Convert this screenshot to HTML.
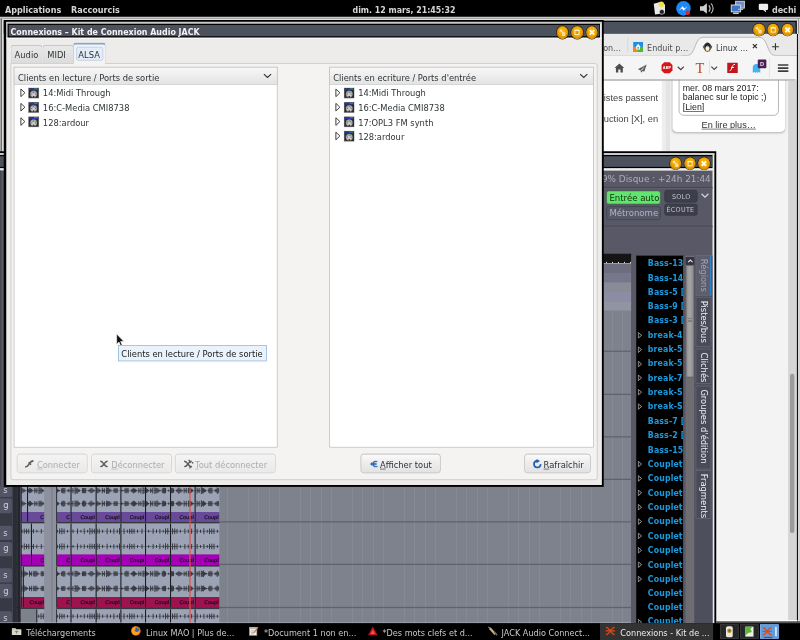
<!DOCTYPE html>
<html lang="fr"><head><meta charset="utf-8"><title>Connexions – Kit de Connexion Audio JACK</title>
<style>
*{box-sizing:border-box;margin:0;padding:0}
html,body{width:800px;height:640px;overflow:hidden;background:#000}
#s{position:absolute;left:0;top:0;width:1280px;height:1024px;transform:scale(.625);transform-origin:0 0;overflow:hidden;filter:blur(.4px);font-family:"DejaVu Sans","Liberation Sans",sans-serif;font-size:13.33px;color:#2e3436;background:#000}
#s div,#s span,#s svg{position:absolute}
.t{white-space:nowrap;line-height:1}
.t u{text-underline-offset:2.2px}
.b{font-weight:bold}
/* window title buttons */
.wb{width:18.4px;height:19.6px;border-radius:50%;background:radial-gradient(ellipse at 50% 38%,#ffbe14 0%,#f0a400 48%,#c98500 78%,#7a4f00 100%);box-shadow:0 0 0 1.1px #2e2100}
.wb svg{left:0;top:0}
/* gtk */
.btn{border:1.3px solid #a9a9a9;border-radius:5px;background:linear-gradient(#fbfbfb,#ececec 50%,#e2e2e2);box-shadow:inset 0 0 0 1px rgba(255,255,255,.7)}
.btn.dis{border-color:#c4c4c4;background:linear-gradient(#f4f4f4,#e9e9e9)}
.hdr{border:1.3px solid #c2c2c2;background:linear-gradient(#f8f8f8,#ededed 50%,#e3e3e3)}
.list{background:#fff;border:1.3px solid #b4b2b0}
.tab{border:1.3px solid #bdbdbd;border-bottom:none;background:linear-gradient(#e9e9e9,#dcdcdc);border-radius:5px 5px 0 0}
.abtn{border-radius:4px;border:1.3px solid #3b3b48}
</style></head>
<body><div id="s">
<div style="left:0px;top:0px;width:1280px;height:27px;background:#000;"></div>
<span class="t" style="left:8px;top:9.59px;font-size:12.9px;color:#d6d6d6;font-weight:bold;">Applications</span>
<span class="t" style="left:113.6px;top:9.59px;font-size:12.9px;color:#d6d6d6;font-weight:bold;">Raccourcis</span>
<span class="t" style="left:564px;top:9.84px;font-size:12.6px;color:#d6d6d6;font-weight:bold;">dim. 12 mars, 21:45:32</span>
<span class="t" style="left:1235px;top:9.59px;font-size:12.9px;color:#d0d0d0;font-weight:bold;">dechi</span>
<svg style="left:1040px;top:0" width="240" height="27" viewBox="0 0 240 27">
<g><path d="M6 6l10-3 8 4v14l-16 2z" fill="#e8e8e8"/><circle cx="18" cy="7" r="4.5" fill="#f3e14a"/><circle cx="19" cy="19" r="4" fill="#222" stroke="#ddd" stroke-width="1"/></g>
<circle cx="53.5" cy="13.4" r="11.6" fill="#1e86f5"/><path d="M46 17l6-7 3 3.4 5-3.4-6 7-3-3.4z" fill="#fff"/><circle cx="60.5" cy="20.5" r="3.6" fill="#e22"/>
<g fill="#cfcfcf"><path d="M80 10h5l6-5v17l-6-5h-5z"/><path d="M94 8.5a7 7 0 0 1 0 10" fill="none" stroke="#cfcfcf" stroke-width="1.8"/><path d="M97.5 5.5a11 11 0 0 1 0 16" fill="none" stroke="#bdbdbd" stroke-width="1.8"/></g>
<g><rect x="137" y="2" width="14" height="11" fill="#6a8fd0" stroke="#d8d8d8" stroke-width="1.5"/><rect x="130" y="8" width="15" height="11" fill="#3f74c8" stroke="#e0e0e0" stroke-width="1.5"/><rect x="133" y="20" width="9" height="2.5" fill="#ccc"/><rect x="141" y="14" width="8" height="2" fill="#bbb"/></g>
<path d="M176 6h11a2 2 0 0 1 2 2v6a2 2 0 0 1-2 2h-2l1 4-5-4h-5a2 2 0 0 1-2-2v-6a2 2 0 0 1 2-2z" fill="#eee"/>
</svg>
<div style="left:0px;top:26.8px;width:1280px;height:971px;background:#f3f3f3;"></div>
<div style="left:0px;top:26.8px;width:1280px;height:2.2px;background:#c9c9c9;"></div>
<div style="left:0px;top:29px;width:1280px;height:1.2px;background:#5c5c5c;"></div>
<div style="left:0px;top:30.2px;width:1280px;height:3px;background:#dedede;"></div>
<div style="left:5px;top:33px;width:1269.5px;height:21px;background:#000;"></div>
<div style="left:6.4px;top:35px;width:1266.6px;height:17.6px;background:#4c515e;"></div>
<div style="left:6.4px;top:128.6px;width:1053px;height:113px;background:#fff;"></div>
<div style="left:1059px;top:128.6px;width:6px;height:113px;background:#eeeeee;"></div>
<div style="left:1065px;top:128.6px;width:7px;height:113px;background:#e4e4e4;"></div>
<span class="t" style="left:966px;top:148.59px;font-size:14.9px;color:#444;font-family:'Liberation Sans',sans-serif;">istes passent</span>
<span class="t" style="left:966px;top:182.59px;font-size:14.9px;color:#444;font-family:'Liberation Sans',sans-serif;">uction [X], en</span>
<div style="left:1076px;top:100px;width:179.5px;height:111px;background:#fff;border-radius:7px;box-shadow:0 1.5px 4px rgba(0,0,0,.28)"></div>
<div style="left:1086px;top:100px;width:160px;height:84.8px;background:#fff;border:1.2px solid #8c8c8c;border-radius:8px"></div>
<span class="t" style="left:1092.4px;top:132.67px;font-size:14.1px;color:#222;font-family:'Liberation Sans',sans-serif;">mer. 08 mars 2017:</span>
<span class="t" style="left:1092.4px;top:148.47px;font-size:14.1px;color:#222;font-family:'Liberation Sans',sans-serif;">balanec sur le topic ;)</span>
<span class="t" style="left:1092.4px;top:164.47px;font-size:14.1px;color:#222;font-family:'Liberation Sans',sans-serif;">[<u>Lien</u>]</span>
<span class="t" style="left:1122.6px;top:191.85px;font-size:14.6px;color:#333;font-family:'Liberation Sans',sans-serif;"><u>En lire plus…</u></span>
<div style="left:6.4px;top:54px;width:1267px;height:35px;background:#e9e9e9;"></div>
<div style="left:6.4px;top:88.2px;width:1267px;height:1.2px;background:#b9b9b9;"></div>
<svg style="left:1090px;top:54px" width="185" height="36" viewBox="1090 54 185 36">
<path d="M1090 89.4H1100C1113 89.4 1111 59.6 1125 59.6H1215C1229 59.6 1227 89.4 1240 89.4H1275V90H1090z" fill="#f5f5f5"/>
<path d="M1090 88.8H1100C1113 88.8 1111 59.6 1125 59.6H1215C1229 59.6 1227 88.8 1240 88.8H1275" fill="none" stroke="#a8a8a8" stroke-width="1.2"/></svg>
<span class="t" style="left:965px;top:71.17px;font-size:12.8px;color:#4d4d4d;">on…</span>
<div style="left:1003.5px;top:60px;width:1.2px;height:24px;background:#cfcfcf;"></div>
<svg style="left:1013px;top:67px" width="16" height="16" viewBox="0 0 16 16"><rect width="16" height="16" fill="#1f8fe0"/><rect y="8" width="8" height="8" fill="#f08a1c"/><rect x="8" y="8" width="8" height="8" fill="#59b52c"/><path d="M5 7l3-4 3 4v5H5z" fill="#fff"/><rect x="7" y="8" width="2" height="3" fill="#1f8fe0"/></svg>
<span class="t" style="left:1035.4px;top:71.17px;font-size:12.8px;color:#4d4d4d;">Enduit p…</span>
<svg style="left:1122.6px;top:66px" width="18" height="18" viewBox="0 0 18 18"><ellipse cx="9" cy="10" rx="5.4" ry="6.6" fill="#222"/><ellipse cx="9" cy="11.5" rx="3.3" ry="4.2" fill="#f4f4f4"/><ellipse cx="9" cy="5" rx="3.4" ry="3.2" fill="#222"/><path d="M3.2 8a6 6 0 0 1 11.6 0" fill="none" stroke="#333" stroke-width="1.6"/><rect x="2" y="7" width="2.6" height="4.4" rx="1" fill="#555"/><rect x="13.4" y="7" width="2.6" height="4.4" rx="1" fill="#555"/><path d="M4.5 16.5h4v-1.6h-3zM13.5 16.5h-4v-1.6h3z" fill="#f2a100"/><path d="M7.8 6.2h2.4L9 7.6z" fill="#f2a100"/></svg>
<span class="t" style="left:1145.6px;top:71.17px;font-size:12.8px;color:#333;">Linux …</span>
<svg style="left:1203.4px;top:69.4px" width="9.6" height="9.6" viewBox="0 0 12 12"><path d="M2 2l8 8M10 2l-8 8" stroke="#333" stroke-width="2.6"/></svg>
<svg style="left:1234.4px;top:67.6px" width="13.4" height="13.4" viewBox="0 0 18 18"><path d="M9 1.5v15M1.5 9h15" stroke="#333" stroke-width="2.4"/></svg>
<div class="wb" style="left:1205.2px;top:37.599999999999994px"><svg width="18.4" height="19.6" viewBox="0 0 18.4 19.6"><path d="M5.4 6.2l4 4M5.2 6h2.6M5.2 6v2.6" stroke="#ffefc0" stroke-width="1.7" fill="none"/><rect x="9.4" y="10.6" width="3.4" height="4" fill="#f6d27a" stroke="#fff0c8" stroke-width="1.2"/></svg></div>
<div class="wb" style="left:1228.1px;top:37.599999999999994px"><svg width="18.4" height="19.6" viewBox="0 0 18.4 19.6"><rect x="6" y="6.6" width="6.4" height="6.8" fill="#e39c00" stroke="#ffefc0" stroke-width="1.5"/><path d="M5.300000000000001 6.7h7.8" stroke="#fff3d0" stroke-width="2.2"/></svg></div>
<div class="wb" style="left:1251.1px;top:37.599999999999994px"><svg width="18.4" height="19.6" viewBox="0 0 18.4 19.6"><path d="M5.6 6.2l7.2 7.2M12.8 6.2l-7.2 7.2" stroke="#fffbe8" stroke-width="2.9" fill="none"/></svg></div>
<div style="left:6.4px;top:89.4px;width:1267px;height:37.8px;background:#f5f5f5;"></div>
<div style="left:6.4px;top:127px;width:1267px;height:1.6px;background:#a4a4a4;"></div>
<svg style="left:960px;top:89px" width="315" height="38" viewBox="0 0 315 38">
<g fill="#4f4f4f"><path transform="translate(31 19.8) scale(.74) translate(-31 -18.5)" d="M31 9l-10.5 9.5h3V28h5.2v-6h4.6v6h5.2v-9.5h3z"/><path transform="translate(67.6 20.8) scale(.62) translate(-66.5 -19.5)" fill="#5c5c5c" d="M78 9L55 21l7 2.6 1.6 6.4 4-4.6 4 2zM63 23l11-10-8.4 11.2z"/></g>
<g transform="translate(107.2 19.6) scale(.84) translate(-106.6 -19.4)"><path d="M101.4 10h10.4l5.2 5.2v10.4l-5.2 5.2h-10.400000000000006l-5.2-5.2v-10.4z" transform="translate(0 -1.2)" fill="#d8141c"/>
<text x="106.6" y="22.2" font-family="Liberation Sans,sans-serif" font-weight="bold" font-size="7.6" fill="#fff" text-anchor="middle">ABP</text></g>
<path d="M124.4 17.8l4.8 4.6 4.8-4.6" fill="none" stroke="#444" stroke-width="1.9"/>
<text x="152.6" y="27.4" font-family="Liberation Serif,serif" font-size="23" fill="#c5401f">T</text>
<rect x="174.6" y="8" width="1" height="22" fill="#d0d0d0"/>
<path d="M178.2 17.6l4.6 4.4 4.6-4.4" fill="none" stroke="#444" stroke-width="1.9"/>
<rect x="203.6" y="11.4" width="16.8" height="16.4" fill="#c4151c"/><path d="M216 14c-3.6 0-4.2 2.8-5.2 5.6s-1.6 4.6-3.2 4.6M210 19h4.2" fill="none" stroke="#fff" stroke-width="1.6"/>
<path d="M244.4 27.6v-8.2a6 6 0 0 1 12 0v8.2l-2-1.8-2 1.8-2-1.8-2 1.8-2-1.8z" fill="#44b4f0"/>
<rect x="252.4" y="6.2" width="13.8" height="14" rx="1.5" fill="#4b1f52"/><text x="259.3" y="16.6" font-family="Liberation Sans,sans-serif" font-weight="bold" font-size="9" fill="#e8d8ea" text-anchor="middle">D</text>
<rect x="271" y="3" width="1" height="32" fill="#dcdcdc"/>
<path d="M284.6 15h16.8M284.6 19.9h16.8M284.6 24.8h16.8" stroke="#3c3c3c" stroke-width="2.7"/>
</svg>
<div style="left:1260.5px;top:128.6px;width:14.6px;height:866px;background:#d5d5d5;"></div>
<div style="left:1264px;top:598.4px;width:6.8px;height:255px;background:#9b9b9b;border-radius:3.4px"></div>
<div style="left:1275px;top:54px;width:2px;height:943px;background:#111;"></div>
<div style="left:1277px;top:33px;width:3px;height:964px;background:#d4d4d4;"></div>
<div style="left:1273.6px;top:33px;width:1.2px;height:21px;background:#000;"></div>
<div style="left:1274.8px;top:33px;width:2px;height:21px;background:#e0e0e0;"></div>
<div style="left:1276.6px;top:30px;width:1.6px;height:24px;background:#666;"></div>
<div style="left:0px;top:29px;width:1.8px;height:968px;background:#a8a8a8;"></div>
<div style="left:1.8px;top:30px;width:1.6px;height:967px;background:#111;"></div>
<div style="left:3.4px;top:30.2px;width:3px;height:967px;background:#dcdcdc;"></div>
<div style="left:1146px;top:992px;width:130px;height:2.2px;background:#fdfdfd;"></div>
<div style="left:1146px;top:994px;width:134px;height:3px;background:#555;"></div>
<div style="left:-8px;top:241.5px;width:1154px;height:760px;background:#000;"></div>
<div style="left:-5px;top:244.5px;width:1148px;height:754px;background:#edecea;"></div>
<div style="left:-5px;top:244.5px;width:1148px;height:3.4px;background:#c9c9c8;"></div>
<div style="left:-2.4000000000000004px;top:247.5px;width:1142.8px;height:21.6px;background:#000;"></div>
<div style="left:-0.5999999999999996px;top:249.5px;width:1139.2px;height:17.6px;background:#4c515e;"></div>
<div class="wb" style="left:1072.0px;top:251.8px"><svg width="18.4" height="19.6" viewBox="0 0 18.4 19.6"><path d="M5.4 6.2l4 4M5.2 6h2.6M5.2 6v2.6" stroke="#ffefc0" stroke-width="1.7" fill="none"/><rect x="9.4" y="10.6" width="3.4" height="4" fill="#f6d27a" stroke="#fff0c8" stroke-width="1.2"/></svg></div>
<div class="wb" style="left:1094.6px;top:251.8px"><svg width="18.4" height="19.6" viewBox="0 0 18.4 19.6"><rect x="6" y="6.6" width="6.4" height="6.8" fill="#e39c00" stroke="#ffefc0" stroke-width="1.5"/><path d="M5.300000000000001 6.7h7.8" stroke="#fff3d0" stroke-width="2.2"/></svg></div>
<div class="wb" style="left:1117.3999999999999px;top:251.8px"><svg width="18.4" height="19.6" viewBox="0 0 18.4 19.6"><path d="M5.6 6.2l7.2 7.2M12.8 6.2l-7.2 7.2" stroke="#fffbe8" stroke-width="2.9" fill="none"/></svg></div>
<div style="left:0px;top:272.6px;width:1140px;height:730px;background:#585866;"></div>
<span class="t" style="right:142.79999999999995px;top:278.79px;font-size:14.2px;color:#aeaebb">DSP : 19% Disque : +24h 21:44</span>
<div style="left:0px;top:299.2px;width:1140px;height:1.4px;background:#474856;"></div>
<div style="left:0px;top:300.6px;width:1140px;height:1px;background:#626372;"></div>
<div class="abtn" style="left:970px;top:305.2px;width:87.4px;height:21.8px;background:#62e56f;border-color:#3b6b44"></div>
<span class="t" style="left:975px;top:309.81px;font-size:13.7px;color:#10300f;">Entrée auto</span>
<div class="abtn" style="left:970px;top:330px;width:87.4px;height:21.6px;background:#565768;"></div>
<span class="t" style="left:975px;top:334.81px;font-size:13.7px;color:#b4b4c0;">Métronome</span>
<div class="abtn" style="left:1063.2px;top:304.4px;width:52.4px;height:19.6px;background:#3d3e4b;border-color:#33343f"></div>
<span class="t" style="left:1075px;top:309.57px;font-size:10.2px;color:#c9c9d2;letter-spacing:.6px;">SOLO</span>
<div class="abtn" style="left:1063.2px;top:325.8px;width:52.4px;height:19.2px;background:#3d3e4b;border-color:#33343f"></div>
<span class="t" style="left:1066.4px;top:330.77px;font-size:10.2px;color:#c9c9d2;letter-spacing:.5px;">ÉCOUTE</span>
<svg style="left:1121px;top:308px" width="14" height="10" viewBox="0 0 14 10"><path d="M1.5 2l5.5 5.5L12.500000000000002 2" fill="none" stroke="#d8d8e0" stroke-width="1.8"/></svg>
<div style="left:0px;top:361.2px;width:1140px;height:1.8px;background:#494a56;"></div>
<div style="left:0px;top:363px;width:1140px;height:1px;background:#5f606e;"></div>
<div style="left:0px;top:409.2px;width:1010px;height:600px;background:#7e828d;"></div>
<div style="left:0px;top:496px;width:1010px;height:520px;background:repeating-linear-gradient(90deg,transparent 0 14.2px,#858a96 14.2px 15.4px,transparent 15.4px 16.64px);"></div>
<div style="left:0px;top:406.4px;width:1010px;height:15px;background:#151515;"></div>
<div style="left:0;top:418.8px;width:1010px;height:2.6px;background:repeating-linear-gradient(90deg,#ddd 0 1.2px,transparent 1.2px 9.6px)"></div>
<div style="left:0px;top:421.2px;width:1010px;height:1px;background:#cfcfd6;"></div>
<div style="left:0px;top:421.8px;width:1010px;height:15.2px;background:#6c6d7d;"></div>
<div style="left:0px;top:436.8px;width:1010px;height:15.2px;background:#76778a;"></div>
<div style="left:0px;top:451.8px;width:1010px;height:15.2px;background:#8b8b98;"></div>
<div style="left:0px;top:466.8px;width:1010px;height:15.2px;background:#8c8ca4;"></div>
<div style="left:0px;top:481.8px;width:1010px;height:15.2px;background:#9293a3;"></div>
<div style="left:0px;top:561.4px;width:1010px;height:2px;background:#5f626c;"></div>
<div style="left:0px;top:629.6px;width:1010px;height:2px;background:#5f626c;"></div>
<div style="left:0px;top:697.8px;width:1010px;height:2px;background:#5f626c;"></div>
<div style="left:0px;top:766.0px;width:1010px;height:2px;background:#5f626c;"></div>
<div style="left:0px;top:834.1999999999999px;width:1010px;height:2px;background:#5f626c;"></div>
<div style="left:0px;top:902.4px;width:1010px;height:2px;background:#5f626c;"></div>
<div style="left:0px;top:970.6px;width:1010px;height:2px;background:#5f626c;"></div>
<div style="left:0px;top:1038.8000000000002px;width:1010px;height:2px;background:#5f626c;"></div>
<div style="left:1010px;top:409.2px;width:8px;height:600px;background:#585866;"></div>
<div style="left:1017.6px;top:409.2px;width:76px;height:600px;background:#000;"></div>
<span class="t" style="left:1036.6px;top:415.62px;font-size:12.5px;color:#1c9ade;font-weight:bold;letter-spacing:.2px;">Bass-13</span>
<span class="t" style="left:1036.6px;top:438.57px;font-size:12.5px;color:#1c9ade;font-weight:bold;letter-spacing:.2px;">Bass-14</span>
<span class="t" style="left:1036.6px;top:461.52px;font-size:12.5px;color:#1c9ade;font-weight:bold;letter-spacing:.2px;">Bass-5 [</span>
<span class="t" style="left:1036.6px;top:484.47px;font-size:12.5px;color:#1c9ade;font-weight:bold;letter-spacing:.2px;">Bass-9 [</span>
<span class="t" style="left:1036.6px;top:507.43px;font-size:12.5px;color:#1c9ade;font-weight:bold;letter-spacing:.2px;">Bass-3 [</span>
<span class="t" style="left:1036.6px;top:530.38px;font-size:12.5px;color:#1c9ade;font-weight:bold;letter-spacing:.2px;">break-4</span>
<svg style="left:1019.6px;top:530.6px" width="8" height="11" viewBox="0 0 8 11"><path d="M1.2 1l5.4 4.500000000000001-5.4 4.500000000000001z" fill="#111" stroke="#b8b8b8" stroke-width="1.2"/></svg>
<span class="t" style="left:1036.6px;top:553.32px;font-size:12.5px;color:#1c9ade;font-weight:bold;letter-spacing:.2px;">break-5</span>
<svg style="left:1019.6px;top:553.5px" width="8" height="11" viewBox="0 0 8 11"><path d="M1.2 1l5.4 4.500000000000001-5.4 4.500000000000001z" fill="#111" stroke="#b8b8b8" stroke-width="1.2"/></svg>
<span class="t" style="left:1036.6px;top:576.27px;font-size:12.5px;color:#1c9ade;font-weight:bold;letter-spacing:.2px;">break-5</span>
<svg style="left:1019.6px;top:576.5px" width="8" height="11" viewBox="0 0 8 11"><path d="M1.2 1l5.4 4.500000000000001-5.4 4.500000000000001z" fill="#111" stroke="#b8b8b8" stroke-width="1.2"/></svg>
<span class="t" style="left:1036.6px;top:599.22px;font-size:12.5px;color:#1c9ade;font-weight:bold;letter-spacing:.2px;">break-7</span>
<svg style="left:1019.6px;top:599.4px" width="8" height="11" viewBox="0 0 8 11"><path d="M1.2 1l5.4 4.500000000000001-5.4 4.500000000000001z" fill="#111" stroke="#b8b8b8" stroke-width="1.2"/></svg>
<span class="t" style="left:1036.6px;top:622.17px;font-size:12.5px;color:#1c9ade;font-weight:bold;letter-spacing:.2px;">break-S</span>
<svg style="left:1019.6px;top:622.4px" width="8" height="11" viewBox="0 0 8 11"><path d="M1.2 1l5.4 4.500000000000001-5.4 4.500000000000001z" fill="#111" stroke="#b8b8b8" stroke-width="1.2"/></svg>
<span class="t" style="left:1036.6px;top:645.12px;font-size:12.5px;color:#1c9ade;font-weight:bold;letter-spacing:.2px;">break-S</span>
<svg style="left:1019.6px;top:645.3px" width="8" height="11" viewBox="0 0 8 11"><path d="M1.2 1l5.4 4.500000000000001-5.4 4.500000000000001z" fill="#111" stroke="#b8b8b8" stroke-width="1.2"/></svg>
<span class="t" style="left:1036.6px;top:668.07px;font-size:12.5px;color:#1c9ade;font-weight:bold;letter-spacing:.2px;">Bass-7 [</span>
<span class="t" style="left:1036.6px;top:691.02px;font-size:12.5px;color:#1c9ade;font-weight:bold;letter-spacing:.2px;">Bass-2 [</span>
<span class="t" style="left:1036.6px;top:713.97px;font-size:12.5px;color:#1c9ade;font-weight:bold;letter-spacing:.2px;">Bass-15</span>
<span class="t" style="left:1036.6px;top:736.92px;font-size:12.5px;color:#1c9ade;font-weight:bold;letter-spacing:.2px;">Couplet</span>
<svg style="left:1019.6px;top:737.1px" width="8" height="11" viewBox="0 0 8 11"><path d="M1.2 1l5.4 4.500000000000001-5.4 4.500000000000001z" fill="#111" stroke="#b8b8b8" stroke-width="1.2"/></svg>
<span class="t" style="left:1036.6px;top:759.88px;font-size:12.5px;color:#1c9ade;font-weight:bold;letter-spacing:.2px;">Couplet</span>
<svg style="left:1019.6px;top:760.1px" width="8" height="11" viewBox="0 0 8 11"><path d="M1.2 1l5.4 4.500000000000001-5.4 4.500000000000001z" fill="#111" stroke="#b8b8b8" stroke-width="1.2"/></svg>
<span class="t" style="left:1036.6px;top:782.82px;font-size:12.5px;color:#1c9ade;font-weight:bold;letter-spacing:.2px;">Couplet</span>
<svg style="left:1019.6px;top:783.0px" width="8" height="11" viewBox="0 0 8 11"><path d="M1.2 1l5.4 4.500000000000001-5.4 4.500000000000001z" fill="#111" stroke="#b8b8b8" stroke-width="1.2"/></svg>
<span class="t" style="left:1036.6px;top:805.77px;font-size:12.5px;color:#1c9ade;font-weight:bold;letter-spacing:.2px;">Couplet</span>
<svg style="left:1019.6px;top:805.9px" width="8" height="11" viewBox="0 0 8 11"><path d="M1.2 1l5.4 4.500000000000001-5.4 4.500000000000001z" fill="#111" stroke="#b8b8b8" stroke-width="1.2"/></svg>
<span class="t" style="left:1036.6px;top:828.72px;font-size:12.5px;color:#1c9ade;font-weight:bold;letter-spacing:.2px;">Couplet</span>
<svg style="left:1019.6px;top:828.9px" width="8" height="11" viewBox="0 0 8 11"><path d="M1.2 1l5.4 4.500000000000001-5.4 4.500000000000001z" fill="#111" stroke="#b8b8b8" stroke-width="1.2"/></svg>
<span class="t" style="left:1036.6px;top:851.67px;font-size:12.5px;color:#1c9ade;font-weight:bold;letter-spacing:.2px;">Couplet</span>
<svg style="left:1019.6px;top:851.9px" width="8" height="11" viewBox="0 0 8 11"><path d="M1.2 1l5.4 4.500000000000001-5.4 4.500000000000001z" fill="#111" stroke="#b8b8b8" stroke-width="1.2"/></svg>
<span class="t" style="left:1036.6px;top:874.62px;font-size:12.5px;color:#1c9ade;font-weight:bold;letter-spacing:.2px;">Couplet</span>
<svg style="left:1019.6px;top:874.8px" width="8" height="11" viewBox="0 0 8 11"><path d="M1.2 1l5.4 4.500000000000001-5.4 4.500000000000001z" fill="#111" stroke="#b8b8b8" stroke-width="1.2"/></svg>
<span class="t" style="left:1036.6px;top:897.57px;font-size:12.5px;color:#1c9ade;font-weight:bold;letter-spacing:.2px;">Couplet</span>
<svg style="left:1019.6px;top:897.8px" width="8" height="11" viewBox="0 0 8 11"><path d="M1.2 1l5.4 4.500000000000001-5.4 4.500000000000001z" fill="#111" stroke="#b8b8b8" stroke-width="1.2"/></svg>
<span class="t" style="left:1036.6px;top:920.52px;font-size:12.5px;color:#1c9ade;font-weight:bold;letter-spacing:.2px;">Couplet</span>
<svg style="left:1019.6px;top:920.7px" width="8" height="11" viewBox="0 0 8 11"><path d="M1.2 1l5.4 4.500000000000001-5.4 4.500000000000001z" fill="#111" stroke="#b8b8b8" stroke-width="1.2"/></svg>
<span class="t" style="left:1036.6px;top:943.47px;font-size:12.5px;color:#1c9ade;font-weight:bold;letter-spacing:.2px;">Couplet</span>
<span class="t" style="left:1036.6px;top:966.42px;font-size:12.5px;color:#1c9ade;font-weight:bold;letter-spacing:.2px;">Couplet</span>
<span class="t" style="left:1036.6px;top:989.38px;font-size:12.5px;color:#1c9ade;font-weight:bold;letter-spacing:.2px;">Couplet</span>
<svg style="left:1019.6px;top:989.6px" width="8" height="11" viewBox="0 0 8 11"><path d="M1.2 1l5.4 4.500000000000001-5.4 4.500000000000001z" fill="#111" stroke="#b8b8b8" stroke-width="1.2"/></svg>
<div style="left:1093.2px;top:409.2px;width:5px;height:600px;background:#585866;"></div>
<div style="left:1097.2px;top:409.2px;width:13.8px;height:600px;background:#6d6d72;"></div>
<div style="left:1097.2px;top:410.8px;width:13.8px;height:13.4px;background:#33343f;border-radius:2px"></div>
<svg style="left:1099.6px;top:414.2px" width="9" height="7" viewBox="0 0 9 7"><path d="M1 5.5L4.5 2 8 5.5" fill="none" stroke="#e6e6ee" stroke-width="1.7"/></svg>
<div style="left:1097.2px;top:424.2px;width:13.8px;height:180px;background:linear-gradient(90deg,#8e8e8e,#a6a6a6 45%,#8a8a8a);border:1px solid #5c5c5c;border-radius:2px"></div>
<div style="left:1101px;top:509.0px;width:6.4px;height:1px;background:#6a6a6a;"></div>
<div style="left:1101px;top:511.6px;width:6.4px;height:1px;background:#6a6a6a;"></div>
<div style="left:1101px;top:514.2px;width:6.4px;height:1px;background:#6a6a6a;"></div>
<div style="left:1111px;top:409.2px;width:29px;height:600px;background:#4e4f5d;"></div>
<div style="left:1112.6px;top:408.4px;width:25.8px;height:65.0px;background:#5c5d6d;border:1.1px solid #6c6d7c;border-right:2.6px solid #2c83cf;"></div>
<span class="t" style="left:1126.0px;top:414.4px;font-size:13.4px;color:#a2a2b2;transform-origin:0 0;transform:rotate(90deg) translate(0,-50%)">Régions</span>
<div style="left:1112.6px;top:475.4px;width:25.8px;height:80.0px;background:#4a4b59;border:1.1px solid #6c6d7c;"></div>
<span class="t" style="left:1126.0px;top:481.4px;font-size:13.4px;color:#f0f0f4;transform-origin:0 0;transform:rotate(90deg) translate(0,-50%)">Pistes/bus</span>
<div style="left:1112.6px;top:558.2px;width:25.8px;height:55.799999999999955px;background:#4a4b59;border:1.1px solid #6c6d7c;"></div>
<span class="t" style="left:1126.0px;top:564.2px;font-size:13.4px;color:#f0f0f4;transform-origin:0 0;transform:rotate(90deg) translate(0,-50%)">Clichés</span>
<div style="left:1112.6px;top:617.4px;width:25.8px;height:133.60000000000002px;background:#4a4b59;border:1.1px solid #6c6d7c;"></div>
<span class="t" style="left:1126.0px;top:623.4px;font-size:13.4px;color:#f0f0f4;transform-origin:0 0;transform:rotate(90deg) translate(0,-50%)">Groupes d'édition</span>
<div style="left:1112.6px;top:752.4px;width:25.8px;height:78.0px;background:#4a4b59;border:1.1px solid #6c6d7c;"></div>
<span class="t" style="left:1126.0px;top:758.4px;font-size:13.4px;color:#f0f0f4;transform-origin:0 0;transform:rotate(90deg) translate(0,-50%)">Fragments</span>
<div style="left:1112.6px;top:831.6px;width:25.8px;height:200px;background:#4e4f5d;"></div>
<div style="left:0px;top:777px;width:20.4px;height:225px;background:#383944;"></div>
<div style="left:20.4px;top:777px;width:6.2px;height:225px;background:#2b2c36;"></div>
<div style="left:26.6px;top:777px;width:1.6px;height:225px;background:#000;"></div>
<div style="left:28.2px;top:777px;width:4.6px;height:225px;background:#23242c;"></div>
<svg style="left:0;top:0" width="1010" height="1024" viewBox="0 0 1010 1024"><rect x="33" y="769.8" width="10.200000000000003" height="65.10000000000002" fill="#9ca3b4"/><rect x="33" y="819.2" width="10.200000000000003" height="15.699999999999932" fill="#68499a"/><path d="M33 785H43.2M33 805.8H43.2" stroke="#4b4e59" stroke-width=".9"/><path d="M35.2 780.6v8.9M36.9 781.7v6.5M38.6 782.3v5.4M40.3 783.9v2.3M35.2 801.3v9.0M36.9 802.6v6.3M38.6 803.2v5.2M40.3 804.7v2.2" stroke="#22242b" stroke-width="1.3" fill="none"/><rect x="33" y="769.8" width="1.7" height="65.10000000000002" fill="#1c1d22"/><rect x="43.2" y="769.8" width="28.200000000000003" height="65.10000000000002" fill="#9ca3b4"/><rect x="43.2" y="819.2" width="28.200000000000003" height="15.699999999999932" fill="#68499a"/><path d="M43.2 785H71.4M43.2 805.8H71.4" stroke="#4b4e59" stroke-width=".9"/><path d="M45.4 782.3v5.4M47.1 780.9v8.2M48.8 781.4v7.1M50.5 782.1v5.7M52.2 783.8v2.3M55.6 780.7v8.6M57.3 783.2v3.5M59.0 780.7v8.5M62.4 779.4v11.3M64.1 781.4v7.2M65.8 779.8v10.4M67.5 782.1v5.8M69.2 783.4v3.3M45.4 803.0v5.5M47.1 801.4v8.8M48.8 801.8v8.0M50.5 803.4v4.7M52.2 804.5v2.7M55.6 801.8v8.0M57.3 804.2v3.2M59.0 802.2v7.2M62.4 801.3v9.0M64.1 801.4v8.8M65.8 801.2v9.2M67.5 802.9v5.9M69.2 803.9v3.7" stroke="#22242b" stroke-width="1.3" fill="none"/><rect x="43.2" y="769.8" width="1.7" height="65.10000000000002" fill="#1c1d22"/><text x="70.2" y="829.9" text-anchor="end" font-family="DejaVu Sans,sans-serif" font-size="8.1" fill="#170d20" stroke="#170d20" stroke-width=".3">C</text><rect x="89.6" y="769.8" width="23.200000000000003" height="65.10000000000002" fill="#9ca3b4"/><rect x="89.6" y="819.2" width="23.200000000000003" height="15.699999999999932" fill="#68499a"/><path d="M89.6 785H112.8M89.6 805.8H112.8" stroke="#4b4e59" stroke-width=".9"/><path d="M91.8 781.9v6.2M93.5 783.3v3.4M95.2 784.2v1.7M98.6 781.6v6.7M100.3 780.5v9.0M102.0 780.8v8.4M103.7 780.7v8.7M108.8 782.9v4.2M110.5 782.2v5.5M91.8 802.8v6.1M93.5 803.8v3.9M98.6 802.7v6.3M100.3 801.2v9.3M102.0 801.3v9.0M103.7 801.8v8.0M108.8 803.9v3.9M110.5 802.6v6.4" stroke="#22242b" stroke-width="1.3" fill="none"/><rect x="89.6" y="769.8" width="1.7" height="65.10000000000002" fill="#1c1d22"/><text x="111.6" y="829.9" text-anchor="end" font-family="DejaVu Sans,sans-serif" font-size="8.1" fill="#170d20" stroke="#170d20" stroke-width=".3">C</text><rect x="112.8" y="769.8" width="40.2" height="65.10000000000002" fill="#9ca3b4"/><rect x="112.8" y="819.2" width="40.2" height="15.699999999999932" fill="#68499a"/><path d="M112.8 785H153M112.8 805.8H153" stroke="#4b4e59" stroke-width=".9"/><path d="M115.0 783.4v3.2M116.7 780.9v8.2M120.1 779.4v11.2M121.8 780.9v8.3M123.5 780.1v9.8M125.2 782.3v5.4M126.9 783.1v3.9M132.0 781.0v8.0M133.7 780.9v8.3M135.4 781.0v8.0M137.1 780.9v8.2M142.2 783.4v3.3M143.9 782.2v5.5M145.6 780.9v8.1M147.3 781.1v7.9M149.0 782.7v4.6M150.7 783.8v2.4M115.0 804.3v3.0M116.7 801.2v9.2M120.1 800.9v9.7M121.8 801.6v8.4M123.5 800.6v10.4M125.2 802.4v6.8M126.9 803.8v4.0M132.0 802.3v7.0M133.7 800.9v9.9M135.4 801.1v9.5M137.1 802.3v7.0M142.2 804.1v3.3M143.9 802.7v6.2M145.6 801.0v9.6M147.3 802.4v6.8M149.0 803.6v4.4M150.7 804.5v2.5" stroke="#22242b" stroke-width="1.3" fill="none"/><rect x="112.8" y="769.8" width="1.7" height="65.10000000000002" fill="#1c1d22"/><text x="151.8" y="829.9" text-anchor="end" font-family="DejaVu Sans,sans-serif" font-size="8.1" fill="#170d20" stroke="#170d20" stroke-width=".3">Coupl</text><rect x="153" y="769.8" width="39.599999999999994" height="65.10000000000002" fill="#9ca3b4"/><rect x="153" y="819.2" width="39.599999999999994" height="15.699999999999932" fill="#68499a"/><path d="M153 785H192.6M153 805.8H192.6" stroke="#4b4e59" stroke-width=".9"/><path d="M155.2 780.5v9.0M156.9 781.3v7.4M158.6 782.0v5.9M160.3 783.6v2.7M163.7 780.7v8.6M165.4 783.4v3.3M167.1 781.4v7.2M170.5 779.6v10.7M172.2 780.4v9.3M173.9 779.9v10.2M175.6 782.0v6.0M177.3 783.2v3.5M182.4 781.8v6.3M184.1 781.2v7.7M185.8 781.2v7.6M187.5 781.5v7.0M155.2 801.8v8.0M156.9 802.5v6.5M158.6 803.5v4.6M160.3 804.6v2.5M163.7 801.2v9.3M165.4 804.2v3.2M167.1 802.1v7.4M170.5 801.1v9.4M172.2 801.8v8.0M173.9 801.6v8.3M175.6 802.4v6.9M177.3 803.7v4.2M182.4 802.6v6.4M184.1 801.9v7.8M185.8 801.8v7.9M187.5 802.2v7.2" stroke="#22242b" stroke-width="1.3" fill="none"/><rect x="153" y="769.8" width="1.7" height="65.10000000000002" fill="#1c1d22"/><text x="191.4" y="829.9" text-anchor="end" font-family="DejaVu Sans,sans-serif" font-size="8.1" fill="#170d20" stroke="#170d20" stroke-width=".3">Coupl</text><rect x="192.6" y="769.8" width="39.400000000000006" height="65.10000000000002" fill="#9ca3b4"/><rect x="192.6" y="819.2" width="39.400000000000006" height="15.699999999999932" fill="#68499a"/><path d="M192.6 785H232M192.6 805.8H232" stroke="#4b4e59" stroke-width=".9"/><path d="M194.8 783.4v3.1M196.5 784.1v1.8M199.9 781.7v6.5M201.6 780.5v9.0M203.3 781.4v7.1M205.0 781.1v7.9M210.1 783.1v3.9M211.8 782.1v5.8M213.5 780.5v9.0M215.2 781.7v6.6M216.9 782.2v5.6M218.6 783.7v2.6M222.0 781.1v7.9M223.7 783.6v2.9M225.4 780.5v9.1M228.8 779.5v10.9M230.5 780.5v9.1M194.8 803.8v4.0M196.5 805.0v1.7M199.9 802.1v7.3M201.6 801.6v8.5M203.3 802.2v7.1M205.0 802.5v6.7M210.1 803.9v3.9M211.8 802.3v7.1M213.5 801.2v9.2M215.2 801.7v8.2M216.9 802.8v6.0M218.6 804.3v3.0M222.0 802.0v7.6M223.7 804.4v2.9M225.4 802.0v7.6M228.8 800.7v10.2M230.5 801.1v9.3" stroke="#22242b" stroke-width="1.3" fill="none"/><rect x="192.6" y="769.8" width="1.7" height="65.10000000000002" fill="#1c1d22"/><text x="230.8" y="829.9" text-anchor="end" font-family="DejaVu Sans,sans-serif" font-size="8.1" fill="#170d20" stroke="#170d20" stroke-width=".3">Coupl</text><rect x="232" y="769.8" width="40" height="65.10000000000002" fill="#9ca3b4"/><rect x="232" y="819.2" width="40" height="15.699999999999932" fill="#68499a"/><path d="M232 785H272M232 805.8H272" stroke="#4b4e59" stroke-width=".9"/><path d="M234.2 781.0v8.0M235.9 782.4v5.2M237.6 783.6v2.7M241.0 781.4v7.3M242.7 783.4v3.3M244.4 780.3v9.3M247.8 779.7v10.6M249.5 780.9v8.3M251.2 780.8v8.5M252.9 781.6v6.8M254.6 783.3v3.5M256.3 784.1v1.7M259.7 781.5v7.1M261.4 780.7v8.6M263.1 780.3v9.4M264.8 780.8v8.3M269.9 783.4v3.3M234.2 801.7v8.2M235.9 803.0v5.7M237.6 804.6v2.3M241.0 801.0v9.5M242.7 804.2v3.3M244.4 801.8v7.9M247.8 801.4v8.8M249.5 802.2v7.1M251.2 800.5v10.7M252.9 802.5v6.5M254.6 804.0v3.7M256.3 804.9v1.8M259.7 801.8v8.1M261.4 800.9v9.7M263.1 802.0v7.6M264.8 802.2v7.2M269.9 803.9v3.7" stroke="#22242b" stroke-width="1.3" fill="none"/><rect x="232" y="769.8" width="1.7" height="65.10000000000002" fill="#1c1d22"/><text x="270.8" y="829.9" text-anchor="end" font-family="DejaVu Sans,sans-serif" font-size="8.1" fill="#170d20" stroke="#170d20" stroke-width=".3">Coupl</text><rect x="272" y="769.8" width="39.39999999999998" height="65.10000000000002" fill="#9ca3b4"/><rect x="272" y="819.2" width="39.39999999999998" height="15.699999999999932" fill="#68499a"/><path d="M272 785H311.4M272 805.8H311.4" stroke="#4b4e59" stroke-width=".9"/><path d="M274.2 780.9v8.2M275.9 780.9v8.1M277.6 781.5v6.9M282.7 783.2v3.6M284.4 781.8v6.4M286.1 779.8v10.5M287.8 781.4v7.1M289.5 782.1v5.9M291.2 783.7v2.6M294.6 780.8v8.4M296.3 783.7v2.7M298.0 780.9v8.2M301.4 780.8v8.4M303.1 780.5v9.1M304.8 780.8v8.4M306.5 781.9v6.2M308.2 783.1v3.9M274.2 801.6v8.4M275.9 801.6v8.4M277.6 801.8v7.9M282.7 803.9v3.7M284.4 802.9v5.8M286.1 801.4v8.7M287.8 801.9v7.9M289.5 803.2v5.2M291.2 804.5v2.6M294.6 801.1v9.3M296.3 804.3v3.1M298.0 801.5v8.6M301.4 800.8v9.9M303.1 801.4v8.8M304.8 801.2v9.2M306.5 802.6v6.3M308.2 804.0v3.6M309.9 804.9v1.8" stroke="#22242b" stroke-width="1.3" fill="none"/><rect x="272" y="769.8" width="1.7" height="65.10000000000002" fill="#1c1d22"/><text x="310.2" y="829.9" text-anchor="end" font-family="DejaVu Sans,sans-serif" font-size="8.1" fill="#170d20" stroke="#170d20" stroke-width=".3">Coupl</text><rect x="311.4" y="769.8" width="39.60000000000002" height="65.10000000000002" fill="#9ca3b4"/><rect x="311.4" y="819.2" width="39.60000000000002" height="15.699999999999932" fill="#68499a"/><path d="M311.4 785H351M311.4 805.8H351" stroke="#4b4e59" stroke-width=".9"/><path d="M315.3 780.4v9.3M317.0 783.2v3.5M318.7 781.1v7.7M322.1 779.4v11.2M323.8 780.4v9.2M325.5 780.8v8.3M327.2 782.2v5.5M328.9 783.2v3.6M334.0 781.8v6.3M335.7 780.4v9.3M337.4 780.5v9.0M339.1 780.6v8.7M344.2 783.1v3.8M345.9 782.2v5.6M347.6 779.8v10.4M349.3 780.8v8.3M315.3 801.1v9.4M317.0 804.3v3.0M318.7 801.7v8.3M322.1 800.4v10.9M323.8 802.1v7.5M325.5 801.2v9.2M327.2 802.7v6.3M328.9 804.1v3.5M334.0 801.9v7.8M335.7 802.0v7.6M337.4 801.6v8.5M339.1 802.0v7.7M344.2 803.9v3.8M345.9 802.7v6.3M347.6 801.7v8.1M349.3 801.6v8.3" stroke="#22242b" stroke-width="1.3" fill="none"/><rect x="311.4" y="769.8" width="1.7" height="65.10000000000002" fill="#1c1d22"/><text x="349.8" y="829.9" text-anchor="end" font-family="DejaVu Sans,sans-serif" font-size="8.1" fill="#170d20" stroke="#170d20" stroke-width=".3">Coupl</text><rect x="32.8" y="834.9" width="318.2" height="2.7" fill="#33353d"/><rect x="33" y="837.6" width="16.5" height="66.39999999999998" fill="#9ca3b4"/><rect x="33" y="887" width="16.5" height="17" fill="#a600b6"/><path d="M33 850H49.5M33 874.4H49.5" stroke="#4b4e59" stroke-width=".9"/><path d="M35.2 847.3v5.5M38.8 845.9v8.1M40.6 849.1v1.7M42.4 846.0v7.9M44.2 849.0v2.0M46.0 846.1v7.7M35.2 871.9v4.9M38.8 869.4v10.1M40.6 873.5v1.7M42.4 870.3v8.2M44.2 873.4v2.1M46.0 870.2v8.5" stroke="#22242b" stroke-width="1.3" fill="none"/><rect x="33" y="837.6" width="1.7" height="66.39999999999998" fill="#1c1d22"/><rect x="49.5" y="837.6" width="21.900000000000006" height="66.39999999999998" fill="#9ca3b4"/><rect x="49.5" y="887" width="21.900000000000006" height="17" fill="#a600b6"/><path d="M49.5 850H71.4M49.5 874.4H71.4" stroke="#4b4e59" stroke-width=".9"/><path d="M51.7 849.2v1.6M53.5 846.4v7.2M58.9 847.8v4.4M66.1 846.4v7.2M51.7 873.4v2.0M53.5 870.3v8.2M58.9 871.5v5.7M66.1 870.6v7.6" stroke="#22242b" stroke-width="1.3" fill="none"/><rect x="49.5" y="837.6" width="1.7" height="66.39999999999998" fill="#1c1d22"/><text x="70.2" y="899" text-anchor="end" font-family="DejaVu Sans,sans-serif" font-size="8.1" fill="#170d20" stroke="#170d20" stroke-width=".3">C</text><rect x="89.6" y="837.6" width="23.200000000000003" height="66.39999999999998" fill="#9ca3b4"/><rect x="89.6" y="887" width="23.200000000000003" height="17" fill="#a600b6"/><path d="M89.6 850H112.8M89.6 874.4H112.8" stroke="#4b4e59" stroke-width=".9"/><path d="M91.8 847.8v4.4M95.4 845.7v8.7M97.2 849.1v1.7M99.0 845.0v9.9M100.8 849.1v1.7M102.6 845.9v8.3M108.0 847.8v4.3M91.8 871.7v5.4M95.4 870.2v8.3M97.2 873.5v1.8M99.0 869.2v10.4M100.8 873.6v1.6M102.6 869.9v9.1M108.0 871.6v5.6" stroke="#22242b" stroke-width="1.3" fill="none"/><rect x="89.6" y="837.6" width="1.7" height="66.39999999999998" fill="#1c1d22"/><text x="111.6" y="899" text-anchor="end" font-family="DejaVu Sans,sans-serif" font-size="8.1" fill="#170d20" stroke="#170d20" stroke-width=".3">C</text><rect x="112.8" y="837.6" width="40.2" height="66.39999999999998" fill="#9ca3b4"/><rect x="112.8" y="887" width="40.2" height="17" fill="#a600b6"/><path d="M112.8 850H153M112.8 874.4H153" stroke="#4b4e59" stroke-width=".9"/><path d="M116.8 847.1v5.8M124.0 845.7v8.6M129.4 847.8v4.4M134.8 845.6v8.9M140.2 847.8v4.4M143.8 844.9v10.2M145.6 849.0v1.9M147.4 845.7v8.6M149.2 849.2v1.7M151.0 846.1v7.8M116.8 872.1v4.5M124.0 869.7v9.5M129.4 871.5v5.8M134.8 870.9v7.0M140.2 871.9v5.1M143.8 869.8v9.2M145.6 873.6v1.6M147.4 870.1v8.5M149.2 873.6v1.6M151.0 870.4v8.0" stroke="#22242b" stroke-width="1.3" fill="none"/><rect x="112.8" y="837.6" width="1.7" height="66.39999999999998" fill="#1c1d22"/><text x="151.8" y="899" text-anchor="end" font-family="DejaVu Sans,sans-serif" font-size="8.1" fill="#170d20" stroke="#170d20" stroke-width=".3">Coupl</text><rect x="153" y="837.6" width="39.599999999999994" height="66.39999999999998" fill="#9ca3b4"/><rect x="153" y="887" width="39.599999999999994" height="17" fill="#a600b6"/><path d="M153 850H192.6M153 874.4H192.6" stroke="#4b4e59" stroke-width=".9"/><path d="M155.2 846.0v7.9M157.0 849.2v1.6M158.8 846.1v7.8M164.2 847.4v5.1M171.4 845.4v9.2M176.8 847.1v5.8M182.2 845.7v8.6M187.6 847.2v5.7M191.2 845.1v9.8M155.2 869.4v10.1M157.0 873.6v1.6M158.8 870.2v8.3M164.2 871.6v5.5M171.4 870.0v8.7M176.8 872.2v4.3M182.2 870.8v7.3M187.6 871.8v5.3M191.2 869.6v9.7" stroke="#22242b" stroke-width="1.3" fill="none"/><rect x="153" y="837.6" width="1.7" height="66.39999999999998" fill="#1c1d22"/><text x="191.4" y="899" text-anchor="end" font-family="DejaVu Sans,sans-serif" font-size="8.1" fill="#170d20" stroke="#170d20" stroke-width=".3">Coupl</text><rect x="192.6" y="837.6" width="39.400000000000006" height="66.39999999999998" fill="#9ca3b4"/><rect x="192.6" y="887" width="39.400000000000006" height="17" fill="#a600b6"/><path d="M192.6 850H232M192.6 874.4H232" stroke="#4b4e59" stroke-width=".9"/><path d="M198.4 845.5v9.0M203.8 847.4v5.1M207.4 846.0v8.0M209.2 849.0v2.0M211.0 845.7v8.5M212.8 849.2v1.6M214.6 846.2v7.7M220.0 847.3v5.4M227.2 845.9v8.2M198.4 870.8v7.2M203.8 871.7v5.4M207.4 869.7v9.4M209.2 873.6v1.6M211.0 870.4v8.0M212.8 873.5v1.7M214.6 870.0v8.7M220.0 872.0v4.7M227.2 870.7v7.3" stroke="#22242b" stroke-width="1.3" fill="none"/><rect x="192.6" y="837.6" width="1.7" height="66.39999999999998" fill="#1c1d22"/><text x="230.8" y="899" text-anchor="end" font-family="DejaVu Sans,sans-serif" font-size="8.1" fill="#170d20" stroke="#170d20" stroke-width=".3">Coupl</text><rect x="232" y="837.6" width="40" height="66.39999999999998" fill="#9ca3b4"/><rect x="232" y="887" width="40" height="17" fill="#a600b6"/><path d="M232 850H272M232 874.4H272" stroke="#4b4e59" stroke-width=".9"/><path d="M237.8 847.8v4.3M245.0 845.9v8.2M250.4 847.1v5.7M255.8 846.3v7.4M261.2 847.7v4.5M264.8 845.4v9.2M266.6 849.0v2.1M268.4 845.1v9.8M270.2 849.2v1.7M237.8 872.2v4.3M245.0 870.5v7.8M250.4 872.0v4.8M255.8 869.9v8.9M261.2 871.5v5.7M264.8 869.2v10.3M266.6 873.5v1.7M268.4 870.0v8.8M270.2 873.5v1.8" stroke="#22242b" stroke-width="1.3" fill="none"/><rect x="232" y="837.6" width="1.7" height="66.39999999999998" fill="#1c1d22"/><text x="270.8" y="899" text-anchor="end" font-family="DejaVu Sans,sans-serif" font-size="8.1" fill="#170d20" stroke="#170d20" stroke-width=".3">Coupl</text><rect x="272" y="837.6" width="39.39999999999998" height="66.39999999999998" fill="#9ca3b4"/><rect x="272" y="887" width="39.39999999999998" height="17" fill="#a600b6"/><path d="M272 850H311.4M272 874.4H311.4" stroke="#4b4e59" stroke-width=".9"/><path d="M276.0 845.3v9.4M277.8 849.1v1.8M279.6 845.5v9.0M281.4 849.1v1.7M283.2 846.4v7.2M288.6 847.6v4.7M295.8 845.8v8.3M301.2 847.1v5.8M306.6 845.7v8.6M276.0 869.5v9.8M277.8 873.6v1.6M279.6 869.5v9.8M281.4 873.5v1.8M283.2 869.9v8.9M288.6 872.2v4.4M295.8 870.5v7.9M301.2 871.5v5.8M306.6 870.5v7.8" stroke="#22242b" stroke-width="1.3" fill="none"/><rect x="272" y="837.6" width="1.7" height="66.39999999999998" fill="#1c1d22"/><text x="310.2" y="899" text-anchor="end" font-family="DejaVu Sans,sans-serif" font-size="8.1" fill="#170d20" stroke="#170d20" stroke-width=".3">Coupl</text><rect x="311.4" y="837.6" width="39.60000000000002" height="66.39999999999998" fill="#9ca3b4"/><rect x="311.4" y="887" width="39.60000000000002" height="17" fill="#a600b6"/><path d="M311.4 850H351M311.4 874.4H351" stroke="#4b4e59" stroke-width=".9"/><path d="M315.4 846.3v7.4M320.8 847.5v5.1M326.2 845.2v9.5M331.6 847.7v4.6M335.2 845.6v8.8M337.0 849.2v1.6M338.8 845.8v8.5M340.6 849.1v1.7M342.4 845.8v8.5M347.8 847.5v4.9M315.4 870.4v8.0M320.8 872.0v4.7M326.2 870.3v8.3M331.6 872.1v4.6M335.2 870.1v8.5M337.0 873.5v1.8M338.8 869.9v9.1M340.6 873.4v2.1M342.4 869.8v9.1M347.8 872.2v4.3" stroke="#22242b" stroke-width="1.3" fill="none"/><rect x="311.4" y="837.6" width="1.7" height="66.39999999999998" fill="#1c1d22"/><text x="349.8" y="899" text-anchor="end" font-family="DejaVu Sans,sans-serif" font-size="8.1" fill="#170d20" stroke="#170d20" stroke-width=".3">Coupl</text><rect x="32.8" y="904" width="318.2" height="2.7" fill="#33353d"/><rect x="33" y="906.8" width="3.5" height="64.80000000000007" fill="#9ca3b4"/><rect x="33" y="955.2" width="3.5" height="16.399999999999977" fill="#9e124e"/><path d="M33 918H36.5M33 941.6H36.5" stroke="#4b4e59" stroke-width=".9"/><path d="M35.2 912.8v10.5M35.2 937.0v9.3" stroke="#22242b" stroke-width="1.3" fill="none"/><rect x="33" y="906.8" width="1.7" height="64.80000000000007" fill="#1c1d22"/><rect x="36.5" y="906.8" width="34.900000000000006" height="64.80000000000007" fill="#9ca3b4"/><rect x="36.5" y="955.2" width="34.900000000000006" height="16.399999999999977" fill="#9e124e"/><path d="M36.5 918H71.4M36.5 941.6H71.4" stroke="#4b4e59" stroke-width=".9"/><path d="M38.7 913.2v9.6M40.4 914.9v6.2M42.1 915.5v5.0M43.8 916.5v2.9M47.2 913.4v9.2M48.9 916.2v3.6M50.6 914.2v7.7M54.0 913.6v8.9M55.7 913.8v8.4M57.4 913.1v9.9M59.1 914.5v7.1M60.8 916.1v3.9M65.9 914.4v7.2M67.6 913.5v9.0M69.3 914.4v7.2M38.7 936.5v10.2M40.4 938.3v6.7M42.1 938.7v5.9M43.8 940.2v2.7M47.2 937.9v7.4M48.9 940.2v2.9M50.6 937.3v8.7M54.0 937.2v8.7M55.7 938.0v7.2M57.4 936.9v9.4M59.1 938.4v6.4M60.8 939.8v3.5M65.9 938.5v6.2M67.6 937.4v8.3M69.3 937.5v8.2" stroke="#22242b" stroke-width="1.3" fill="none"/><rect x="36.5" y="906.8" width="1.7" height="64.80000000000007" fill="#1c1d22"/><text x="70.2" y="966.6" text-anchor="end" font-family="DejaVu Sans,sans-serif" font-size="8.1" fill="#170d20" stroke="#170d20" stroke-width=".3">Coupl</text><rect x="89.6" y="906.8" width="23.200000000000003" height="64.80000000000007" fill="#9ca3b4"/><rect x="89.6" y="955.2" width="23.200000000000003" height="16.399999999999977" fill="#9e124e"/><path d="M89.6 918H112.8M89.6 941.6H112.8" stroke="#4b4e59" stroke-width=".9"/><path d="M91.8 914.5v7.1M93.5 916.1v3.8M95.2 917.1v1.7M98.6 914.6v6.7M100.3 913.9v8.2M102.0 913.3v9.5M103.7 913.9v8.3M108.8 916.2v3.6M110.5 914.7v6.6M91.8 938.6v6.1M93.5 939.9v3.4M98.6 938.3v6.7M100.3 937.8v7.6M102.0 937.6v7.9M103.7 937.8v7.6M108.8 939.6v4.0M110.5 938.3v6.7" stroke="#22242b" stroke-width="1.3" fill="none"/><rect x="89.6" y="906.8" width="1.7" height="64.80000000000007" fill="#1c1d22"/><text x="111.6" y="966.6" text-anchor="end" font-family="DejaVu Sans,sans-serif" font-size="8.1" fill="#170d20" stroke="#170d20" stroke-width=".3">C</text><rect x="112.8" y="906.8" width="40.2" height="64.80000000000007" fill="#9ca3b4"/><rect x="112.8" y="955.2" width="40.2" height="16.399999999999977" fill="#9e124e"/><path d="M112.8 918H153M112.8 941.6H153" stroke="#4b4e59" stroke-width=".9"/><path d="M115.0 916.4v3.1M116.7 914.2v7.6M120.1 913.3v9.3M121.8 913.4v9.1M123.5 913.7v8.6M125.2 915.1v5.7M126.9 916.0v3.9M132.0 914.4v7.3M133.7 914.0v8.0M135.4 914.2v7.6M137.1 914.2v7.6M142.2 916.4v3.3M143.9 915.0v6.0M145.6 913.7v8.6M147.3 913.8v8.3M149.0 915.7v4.6M150.7 916.9v2.3M115.0 940.2v2.7M116.7 937.6v8.1M120.1 936.1v11.0M121.8 937.1v8.9M123.5 936.2v10.8M125.2 938.1v7.0M126.9 939.9v3.5M132.0 937.7v7.8M133.7 937.8v7.6M135.4 937.2v8.7M137.1 937.8v7.5M142.2 940.0v3.3M143.9 938.9v5.3M145.6 937.2v8.7M147.3 938.1v7.0M149.0 938.6v5.9M150.7 940.4v2.3" stroke="#22242b" stroke-width="1.3" fill="none"/><rect x="112.8" y="906.8" width="1.7" height="64.80000000000007" fill="#1c1d22"/><text x="151.8" y="966.6" text-anchor="end" font-family="DejaVu Sans,sans-serif" font-size="8.1" fill="#170d20" stroke="#170d20" stroke-width=".3">Coupl</text><rect x="153" y="906.8" width="39.599999999999994" height="64.80000000000007" fill="#9ca3b4"/><rect x="153" y="955.2" width="39.599999999999994" height="16.399999999999977" fill="#9e124e"/><path d="M153 918H192.6M153 941.6H192.6" stroke="#4b4e59" stroke-width=".9"/><path d="M155.2 912.7v10.7M156.9 914.7v6.6M158.6 915.5v5.0M160.3 916.6v2.9M163.7 913.9v8.2M165.4 916.7v2.7M167.1 913.9v8.3M170.5 912.4v11.1M172.2 914.2v7.6M173.9 913.5v9.0M175.6 914.5v7.0M177.3 916.4v3.1M182.4 914.1v7.9M184.1 914.2v7.6M185.8 914.4v7.2M187.5 914.6v6.8M155.2 936.6v10.1M156.9 937.5v8.2M158.6 939.1v4.9M160.3 940.4v2.4M163.7 937.3v8.6M165.4 940.2v2.9M167.1 937.2v8.9M170.5 937.0v9.2M172.2 938.1v7.1M173.9 936.6v10.1M175.6 938.1v7.0M177.3 939.7v3.8M179.0 940.7v1.8M182.4 938.3v6.7M184.1 937.2v8.8M185.8 936.9v9.5M187.5 937.2v8.9" stroke="#22242b" stroke-width="1.3" fill="none"/><rect x="153" y="906.8" width="1.7" height="64.80000000000007" fill="#1c1d22"/><text x="191.4" y="966.6" text-anchor="end" font-family="DejaVu Sans,sans-serif" font-size="8.1" fill="#170d20" stroke="#170d20" stroke-width=".3">Coupl</text><rect x="192.6" y="906.8" width="39.400000000000006" height="64.80000000000007" fill="#9ca3b4"/><rect x="192.6" y="955.2" width="39.400000000000006" height="16.399999999999977" fill="#9e124e"/><path d="M192.6 918H232M192.6 941.6H232" stroke="#4b4e59" stroke-width=".9"/><path d="M194.8 916.2v3.6M199.9 914.7v6.6M201.6 913.2v9.6M203.3 913.5v8.9M205.0 913.7v8.6M210.1 916.3v3.5M211.8 915.0v5.9M213.5 913.5v9.0M215.2 914.1v7.9M216.9 915.7v4.5M218.6 916.8v2.4M222.0 914.2v7.7M223.7 916.6v2.7M225.4 914.4v7.2M228.8 913.3v9.4M230.5 913.2v9.5M194.8 939.6v4.1M196.5 940.7v1.8M199.9 938.4v6.4M201.6 937.7v7.8M203.3 937.4v8.3M205.0 937.5v8.3M210.1 939.8v3.5M211.8 938.4v6.5M213.5 936.7v9.8M215.2 937.7v7.8M216.9 938.7v5.7M218.6 940.2v2.7M222.0 937.0v9.2M223.7 940.1v2.9M225.4 937.4v8.5M228.8 936.3v10.6M230.5 937.8v7.6" stroke="#22242b" stroke-width="1.3" fill="none"/><rect x="192.6" y="906.8" width="1.7" height="64.80000000000007" fill="#1c1d22"/><text x="230.8" y="966.6" text-anchor="end" font-family="DejaVu Sans,sans-serif" font-size="8.1" fill="#170d20" stroke="#170d20" stroke-width=".3">Coupl</text><rect x="232" y="906.8" width="40" height="64.80000000000007" fill="#9ca3b4"/><rect x="232" y="955.2" width="40" height="16.399999999999977" fill="#9e124e"/><path d="M232 918H272M232 941.6H272" stroke="#4b4e59" stroke-width=".9"/><path d="M234.2 914.6v6.7M235.9 915.6v4.8M237.6 916.8v2.3M241.0 913.7v8.5M242.7 916.5v3.0M244.4 914.0v8.1M247.8 913.0v9.9M249.5 914.2v7.6M251.2 912.9v10.2M252.9 914.7v6.5M254.6 915.9v4.2M259.7 914.0v8.0M261.4 913.1v9.7M263.1 913.3v9.4M264.8 914.6v6.7M269.9 916.3v3.3M234.2 937.4v8.3M235.9 938.9v5.3M237.6 940.1v2.9M241.0 937.0v9.2M242.7 940.1v3.1M244.4 937.7v7.7M247.8 936.0v11.2M249.5 937.9v7.3M251.2 936.8v9.6M252.9 938.4v6.5M254.6 939.9v3.3M259.7 938.3v6.6M261.4 937.5v8.2M263.1 937.3v8.6M264.8 937.5v8.2M269.9 939.9v3.5" stroke="#22242b" stroke-width="1.3" fill="none"/><rect x="232" y="906.8" width="1.7" height="64.80000000000007" fill="#1c1d22"/><text x="270.8" y="966.6" text-anchor="end" font-family="DejaVu Sans,sans-serif" font-size="8.1" fill="#170d20" stroke="#170d20" stroke-width=".3">Coupl</text><rect x="272" y="906.8" width="39.39999999999998" height="64.80000000000007" fill="#9ca3b4"/><rect x="272" y="955.2" width="39.39999999999998" height="16.399999999999977" fill="#9e124e"/><path d="M272 918H311.4M272 941.6H311.4" stroke="#4b4e59" stroke-width=".9"/><path d="M274.2 913.3v9.3M275.9 914.2v7.5M277.6 914.3v7.4M282.7 916.2v3.7M284.4 915.3v5.4M286.1 913.9v8.2M287.8 914.5v7.1M289.5 915.4v5.3M291.2 916.6v2.7M294.6 914.3v7.5M296.3 916.3v3.3M298.0 914.0v8.1M301.4 913.3v9.3M303.1 913.3v9.5M304.8 913.6v8.8M306.5 914.8v6.4M308.2 916.3v3.5M274.2 936.7v9.8M275.9 936.8v9.6M277.6 937.9v7.5M282.7 939.9v3.3M284.4 938.9v5.3M286.1 936.4v10.5M287.8 938.0v7.1M289.5 938.8v5.7M291.2 940.3v2.5M294.6 937.5v8.2M296.3 940.2v2.8M298.0 938.0v7.1M301.4 936.5v10.3M303.1 936.9v9.3M304.8 937.5v8.2M306.5 938.4v6.5M308.2 939.9v3.5" stroke="#22242b" stroke-width="1.3" fill="none"/><rect x="272" y="906.8" width="1.7" height="64.80000000000007" fill="#1c1d22"/><text x="310.2" y="966.6" text-anchor="end" font-family="DejaVu Sans,sans-serif" font-size="8.1" fill="#170d20" stroke="#170d20" stroke-width=".3">Coupl</text><rect x="311.4" y="906.8" width="39.60000000000002" height="64.80000000000007" fill="#9ca3b4"/><rect x="311.4" y="955.2" width="39.60000000000002" height="16.399999999999977" fill="#9e124e"/><path d="M311.4 918H351M311.4 941.6H351" stroke="#4b4e59" stroke-width=".9"/><path d="M315.3 914.1v7.8M317.0 916.4v3.1M318.7 913.3v9.4M322.1 913.1v9.9M323.8 913.5v9.1M325.5 912.7v10.7M327.2 915.2v5.7M328.9 916.4v3.2M330.6 917.1v1.8M334.0 914.4v7.2M335.7 914.2v7.7M337.4 913.3v9.4M339.1 914.2v7.5M344.2 916.0v4.0M345.9 915.2v5.6M347.6 912.9v10.2M349.3 914.7v6.7M315.3 937.0v9.2M317.0 939.9v3.4M318.7 937.8v7.5M322.1 936.8v9.6M323.8 937.4v8.4M325.5 937.1v9.0M327.2 938.8v5.5M328.9 939.9v3.4M330.6 940.8v1.7M334.0 938.5v6.3M335.7 937.1v9.0M337.4 937.1v9.0M339.1 938.2v6.7M344.2 939.7v3.7M345.9 938.4v6.3M347.6 936.7v9.7M349.3 938.2v6.9" stroke="#22242b" stroke-width="1.3" fill="none"/><rect x="311.4" y="906.8" width="1.7" height="64.80000000000007" fill="#1c1d22"/><text x="349.8" y="966.6" text-anchor="end" font-family="DejaVu Sans,sans-serif" font-size="8.1" fill="#170d20" stroke="#170d20" stroke-width=".3">Coupl</text><rect x="32.8" y="971.6" width="318.2" height="2.7" fill="#33353d"/><rect x="58" y="975" width="13.400000000000006" height="66" fill="#9ca3b4"/><rect x="58" y="1024.4" width="13.400000000000006" height="16.59999999999991" fill="#68499a"/><path d="M58 986H71.4M58 1010H71.4" stroke="#4b4e59" stroke-width=".9"/><path d="M62.0 983.4v5.2M65.6 981.2v9.6M67.4 985.1v1.8M69.2 981.5v9.0M62.0 1007.4v5.2M65.6 1005.8v8.5M67.4 1009.0v2.0M69.2 1005.0v10.0" stroke="#22242b" stroke-width="1.3" fill="none"/><rect x="58" y="975" width="1.7" height="66" fill="#1c1d22"/><rect x="89.6" y="975" width="23.200000000000003" height="66" fill="#9ca3b4"/><rect x="89.6" y="1024.4" width="23.200000000000003" height="16.59999999999991" fill="#68499a"/><path d="M89.6 986H112.8M89.6 1010H112.8" stroke="#4b4e59" stroke-width=".9"/><path d="M91.8 983.5v5.0M95.4 981.4v9.1M97.2 985.2v1.6M99.0 981.9v8.2M100.8 985.1v1.8M102.6 982.4v7.3M108.0 983.8v4.4M91.8 1007.3v5.4M95.4 1005.4v9.2M97.2 1009.2v1.6M99.0 1005.4v9.2M100.8 1009.1v1.8M102.6 1005.3v9.4M108.0 1007.1v5.8" stroke="#22242b" stroke-width="1.3" fill="none"/><rect x="89.6" y="975" width="1.7" height="66" fill="#1c1d22"/><text x="111.6" y="1036" text-anchor="end" font-family="DejaVu Sans,sans-serif" font-size="8.1" fill="#170d20" stroke="#170d20" stroke-width=".3">C</text><rect x="112.8" y="975" width="40.2" height="66" fill="#9ca3b4"/><rect x="112.8" y="1024.4" width="40.2" height="16.59999999999991" fill="#68499a"/><path d="M112.8 986H153M112.8 1010H153" stroke="#4b4e59" stroke-width=".9"/><path d="M116.8 983.1v5.8M124.0 982.3v7.4M129.4 983.8v4.4M134.8 982.3v7.4M140.2 983.2v5.5M143.8 981.4v9.2M145.6 985.0v2.1M147.4 981.8v8.4M149.2 985.1v1.7M151.0 981.9v8.3M116.8 1007.8v4.4M124.0 1005.6v8.7M129.4 1007.3v5.5M134.8 1005.7v8.6M140.2 1007.4v5.1M143.8 1004.9v10.3M145.6 1009.2v1.6M147.4 1004.7v10.6M149.2 1009.0v1.9M151.0 1006.0v8.0" stroke="#22242b" stroke-width="1.3" fill="none"/><rect x="112.8" y="975" width="1.7" height="66" fill="#1c1d22"/><text x="151.8" y="1036" text-anchor="end" font-family="DejaVu Sans,sans-serif" font-size="8.1" fill="#170d20" stroke="#170d20" stroke-width=".3">Coupl</text><rect x="153" y="975" width="39.599999999999994" height="66" fill="#9ca3b4"/><rect x="153" y="1024.4" width="39.599999999999994" height="16.59999999999991" fill="#68499a"/><path d="M153 986H192.6M153 1010H192.6" stroke="#4b4e59" stroke-width=".9"/><path d="M155.2 981.0v10.0M157.0 985.1v1.7M158.8 981.3v9.5M164.2 983.3v5.5M171.4 982.4v7.2M176.8 983.4v5.3M182.2 981.7v8.7M187.6 983.8v4.4M191.2 981.2v9.5M155.2 1005.5v9.0M157.0 1009.1v1.8M158.8 1005.4v9.3M164.2 1007.4v5.3M171.4 1006.3v7.3M176.8 1007.4v5.2M182.2 1005.7v8.6M187.6 1007.1v5.7M191.2 1005.9v8.2" stroke="#22242b" stroke-width="1.3" fill="none"/><rect x="153" y="975" width="1.7" height="66" fill="#1c1d22"/><text x="191.4" y="1036" text-anchor="end" font-family="DejaVu Sans,sans-serif" font-size="8.1" fill="#170d20" stroke="#170d20" stroke-width=".3">Coupl</text><rect x="192.6" y="975" width="39.400000000000006" height="66" fill="#9ca3b4"/><rect x="192.6" y="1024.4" width="39.400000000000006" height="16.59999999999991" fill="#68499a"/><path d="M192.6 986H232M192.6 1010H232" stroke="#4b4e59" stroke-width=".9"/><path d="M198.4 981.4v9.2M203.8 983.6v4.7M207.4 981.2v9.6M209.2 985.1v1.9M211.0 981.6v8.8M212.8 985.0v1.9M214.6 981.9v8.1M220.0 983.7v4.7M227.2 982.0v8.0M198.4 1005.8v8.4M203.8 1007.7v4.6M207.4 1005.4v9.2M209.2 1009.0v1.9M211.0 1005.0v10.1M212.8 1009.2v1.7M214.6 1006.1v7.8M220.0 1007.2v5.7M227.2 1005.4v9.1" stroke="#22242b" stroke-width="1.3" fill="none"/><rect x="192.6" y="975" width="1.7" height="66" fill="#1c1d22"/><text x="230.8" y="1036" text-anchor="end" font-family="DejaVu Sans,sans-serif" font-size="8.1" fill="#170d20" stroke="#170d20" stroke-width=".3">Coupl</text><rect x="232" y="975" width="40" height="66" fill="#9ca3b4"/><rect x="232" y="1024.4" width="40" height="16.59999999999991" fill="#68499a"/><path d="M232 986H272M232 1010H272" stroke="#4b4e59" stroke-width=".9"/><path d="M237.8 983.7v4.6M245.0 982.1v7.9M250.4 983.2v5.6M255.8 981.8v8.4M261.2 983.5v5.1M264.8 981.2v9.6M266.6 985.0v2.1M268.4 981.8v8.4M270.2 985.0v2.0M237.8 1007.7v4.7M245.0 1006.1v7.8M250.4 1007.7v4.7M255.8 1005.6v8.8M261.2 1007.5v5.0M264.8 1005.1v9.7M266.6 1009.0v2.0M268.4 1005.5v9.0M270.2 1009.0v2.0" stroke="#22242b" stroke-width="1.3" fill="none"/><rect x="232" y="975" width="1.7" height="66" fill="#1c1d22"/><text x="270.8" y="1036" text-anchor="end" font-family="DejaVu Sans,sans-serif" font-size="8.1" fill="#170d20" stroke="#170d20" stroke-width=".3">Coupl</text><rect x="272" y="975" width="39.39999999999998" height="66" fill="#9ca3b4"/><rect x="272" y="1024.4" width="39.39999999999998" height="16.59999999999991" fill="#68499a"/><path d="M272 986H311.4M272 1010H311.4" stroke="#4b4e59" stroke-width=".9"/><path d="M276.0 981.7v8.7M277.8 985.2v1.7M279.6 981.2v9.5M281.4 985.2v1.6M283.2 981.3v9.3M288.6 983.8v4.5M295.8 982.4v7.1M301.2 983.4v5.3M306.6 982.4v7.2M276.0 1005.0v10.1M277.8 1009.0v2.1M279.6 1006.0v8.0M281.4 1009.0v2.0M283.2 1005.3v9.3M288.6 1007.7v4.6M295.8 1005.5v9.1M301.2 1007.4v5.3M306.6 1006.4v7.3" stroke="#22242b" stroke-width="1.3" fill="none"/><rect x="272" y="975" width="1.7" height="66" fill="#1c1d22"/><text x="310.2" y="1036" text-anchor="end" font-family="DejaVu Sans,sans-serif" font-size="8.1" fill="#170d20" stroke="#170d20" stroke-width=".3">Coupl</text><rect x="311.4" y="975" width="39.60000000000002" height="66" fill="#9ca3b4"/><rect x="311.4" y="1024.4" width="39.60000000000002" height="16.59999999999991" fill="#68499a"/><path d="M311.4 986H351M311.4 1010H351" stroke="#4b4e59" stroke-width=".9"/><path d="M315.4 982.0v8.1M320.8 983.6v4.7M326.2 982.1v7.8M331.6 983.2v5.6M335.2 982.0v7.9M337.0 985.1v1.8M338.8 981.5v9.0M340.6 985.0v2.0M342.4 982.1v7.9M347.8 983.7v4.6M315.4 1005.5v9.1M320.8 1007.7v4.6M326.2 1006.5v7.0M331.6 1007.2v5.5M335.2 1005.4v9.2M337.0 1009.1v1.8M338.8 1004.9v10.1M340.6 1009.1v1.7M342.4 1005.3v9.4M347.8 1007.3v5.4" stroke="#22242b" stroke-width="1.3" fill="none"/><rect x="311.4" y="975" width="1.7" height="66" fill="#1c1d22"/><text x="349.8" y="1036" text-anchor="end" font-family="DejaVu Sans,sans-serif" font-size="8.1" fill="#170d20" stroke="#170d20" stroke-width=".3">Coupl</text><rect x="32.8" y="1041" width="318.2" height="2.7" fill="#33353d"/></svg>
<div style="left:71.4px;top:777px;width:18.2px;height:225px;background:#8c919d;"></div>
<div style="left:82.4px;top:777px;width:1.2px;height:225px;background:#7a7f8b;"></div>
<div style="left:303.2px;top:777px;width:1.6px;height:225px;background:#e0524e;"></div>
<div style="left:0px;top:771.8px;width:19px;height:23.2px;background:#52536400;border-radius:0 3px 3px 0"></div>
<div style="left:0px;top:771.8px;width:19px;height:23.2px;background:#535465;border-radius:0 3px 3px 0"></div>
<span class="t" style="left:5.4px;top:776.66px;font-size:13.4px;color:#d2d2da;">s</span>
<div style="left:0px;top:797.4px;width:19px;height:23.2px;background:#52536400;border-radius:0 3px 3px 0"></div>
<div style="left:0px;top:797.4px;width:19px;height:23.2px;background:#535465;border-radius:0 3px 3px 0"></div>
<span class="t" style="left:5.4px;top:802.26px;font-size:13.4px;color:#d2d2da;">g</span>
<div style="left:0px;top:840.9px;width:19px;height:23.2px;background:#52536400;border-radius:0 3px 3px 0"></div>
<div style="left:0px;top:840.9px;width:19px;height:23.2px;background:#535465;border-radius:0 3px 3px 0"></div>
<span class="t" style="left:5.4px;top:845.76px;font-size:13.4px;color:#d2d2da;">s</span>
<div style="left:0px;top:866.5px;width:19px;height:23.2px;background:#52536400;border-radius:0 3px 3px 0"></div>
<div style="left:0px;top:866.5px;width:19px;height:23.2px;background:#535465;border-radius:0 3px 3px 0"></div>
<span class="t" style="left:5.4px;top:871.36px;font-size:13.4px;color:#d2d2da;">g</span>
<div style="left:0px;top:908.5px;width:19px;height:23.2px;background:#52536400;border-radius:0 3px 3px 0"></div>
<div style="left:0px;top:908.5px;width:19px;height:23.2px;background:#535465;border-radius:0 3px 3px 0"></div>
<span class="t" style="left:5.4px;top:913.36px;font-size:13.4px;color:#d2d2da;">s</span>
<div style="left:0px;top:934.1px;width:19px;height:23.2px;background:#52536400;border-radius:0 3px 3px 0"></div>
<div style="left:0px;top:934.1px;width:19px;height:23.2px;background:#535465;border-radius:0 3px 3px 0"></div>
<span class="t" style="left:5.4px;top:938.96px;font-size:13.4px;color:#d2d2da;">g</span>
<div style="left:0px;top:977.9px;width:19px;height:23.2px;background:#52536400;border-radius:0 3px 3px 0"></div>
<div style="left:0px;top:977.9px;width:19px;height:23.2px;background:#535465;border-radius:0 3px 3px 0"></div>
<span class="t" style="left:5.4px;top:982.76px;font-size:13.4px;color:#d2d2da;">s</span>
<div style="left:0px;top:1003.5px;width:19px;height:23.2px;background:#52536400;border-radius:0 3px 3px 0"></div>
<div style="left:0px;top:1003.5px;width:19px;height:23.2px;background:#535465;border-radius:0 3px 3px 0"></div>
<span class="t" style="left:5.4px;top:1008.36px;font-size:13.4px;color:#d2d2da;">g</span>
<div style="left:0px;top:272.6px;width:6.6px;height:505px;background:#585866;"></div>
<div style="left:0px;top:272.6px;width:2px;height:505px;background:#45464f;"></div>
<div style="left:6.4px;top:32.2px;width:959.4px;height:746.5999999999999px;background:#000;"></div>
<div style="left:9.600000000000001px;top:35.300000000000004px;width:953.1999999999999px;height:740.5999999999999px;background:#edecea;"></div>
<div style="left:9.600000000000001px;top:35.300000000000004px;width:953.1999999999999px;height:4px;background:#c9c9c8;"></div>
<div style="left:9.600000000000001px;top:60.0px;width:953.1999999999999px;height:2.4px;background:#fbfbfa;"></div>
<div style="left:12.3px;top:38.400000000000006px;width:948.0px;height:21.6px;background:#000;"></div>
<div style="left:14.2px;top:40.300000000000004px;width:944.6px;height:17.8px;background:#4c515e;"></div>
<span class="t" style="left:16.8px;top:45.87px;font-size:12.68px;color:#f4f4f4;font-weight:bold;">Connexions – Kit de Connexion Audio JACK</span>
<div class="wb" style="left:891.0px;top:42.2px"><svg width="18.4" height="19.6" viewBox="0 0 18.4 19.6"><path d="M5.4 6.2l4 4M5.2 6h2.6M5.2 6v2.6" stroke="#ffefc0" stroke-width="1.7" fill="none"/><rect x="9.4" y="10.6" width="3.4" height="4" fill="#f6d27a" stroke="#fff0c8" stroke-width="1.2"/></svg></div>
<div class="wb" style="left:914.4px;top:42.2px"><svg width="18.4" height="19.6" viewBox="0 0 18.4 19.6"><rect x="6" y="6.6" width="6.4" height="6.8" fill="#e39c00" stroke="#ffefc0" stroke-width="1.5"/><path d="M5.300000000000001 6.7h7.8" stroke="#fff3d0" stroke-width="2.2"/></svg></div>
<div class="wb" style="left:937.5999999999999px;top:42.2px"><svg width="18.4" height="19.6" viewBox="0 0 18.4 19.6"><path d="M5.6 6.2l7.2 7.2M12.8 6.2l-7.2 7.2" stroke="#fffbe8" stroke-width="2.9" fill="none"/></svg></div>
<div style="left:16.8px;top:100.8px;width:939.4px;height:667.6px;background:#f4f3f2;border:1.4px solid #bdbab8;border-radius:0 4px 4px 4px"></div>
<div class="tab" style="left:16.8px;top:72px;width:51.6px;height:29.4px;"></div>
<div class="tab" style="left:68px;top:72px;width:50px;height:29.4px;"></div>
<span class="t" style="left:23.4px;top:81.12px;font-size:13.33px;color:#2e3436;">Audio</span>
<span class="t" style="left:75.6px;top:81.12px;font-size:13.33px;color:#2e3436;">MIDI</span>
<div style="left:117.4px;top:67.6px;width:51.8px;height:35px;background:#f4f3f2;border:1.3px solid #b4b4b4;border-bottom:none;border-radius:5px 5px 0 0;border-top:3px solid #7aa6da"></div>
<div style="left:121.6px;top:75.2px;width:43.4px;height:21.4px;background:#e3ecf7;border:1.2px solid #a9c4e6;border-radius:3px"></div>
<span class="t" style="left:125.4px;top:81.12px;font-size:13.33px;color:#2e3436;">ALSA</span>
<div class="list" style="left:22.4px;top:107.4px;width:421.8px;height:608.6px;"></div>
<div class="hdr" style="left:22.4px;top:107.4px;width:421.8px;height:29px;"></div>
<span class="t" style="left:28.799999999999997px;top:117.72px;font-size:13.33px;color:#2e3436;">Clients en lecture / Ports de sortie</span>
<svg style="left:421.4px;top:117px" width="14" height="9" viewBox="0 0 14 9"><path d="M1.2 1.6l5.8 5.4 5.8-5.4" fill="none" stroke="#333" stroke-width="1.8"/></svg>
<svg style="left:31.599999999999998px;top:141.0px" width="10" height="15" viewBox="0 0 10 15"><path d="M1.4 1.4l6.4 6.1-6.4 6.1z" fill="#fff" stroke="#333" stroke-width="1.5"/></svg>
<svg style="left:45.2px;top:140.0px" width="17.6" height="17.6" viewBox="0 0 16 16"><rect x="0" y="0" width="16" height="16" fill="#8a8a8a"/><rect x="1" y="1" width="14" height="14" fill="#2b2b2b"/><rect x="1.4" y="1.4" width="13.2" height="2.6" fill="#2236b0"/><rect x="8.6" y="1.4" width="5" height="1.4" fill="#2fa048"/><circle cx="8" cy="9.6" r="4.8" fill="#c9c9c9"/><circle cx="8" cy="9.6" r="4.8" fill="none" stroke="#6e6e6e" stroke-width=".8"/><g fill="#555"><circle cx="5.2" cy="9.4" r=".8"/><circle cx="10.8" cy="9.4" r=".8"/><circle cx="8" cy="6.8" r=".8"/><circle cx="6" cy="7.6" r=".7"/><circle cx="10" cy="7.6" r=".7"/></g><rect x="7" y="12.4" width="2" height="2.4" fill="#2b2b2b"/></svg>
<span class="t" style="left:68.6px;top:143.32px;font-size:13.33px;color:#2e3436;">14:Midi Through</span>
<svg style="left:31.599999999999998px;top:164.1px" width="10" height="15" viewBox="0 0 10 15"><path d="M1.4 1.4l6.4 6.1-6.4 6.1z" fill="#fff" stroke="#333" stroke-width="1.5"/></svg>
<svg style="left:45.2px;top:163.1px" width="17.6" height="17.6" viewBox="0 0 16 16"><rect x="0" y="0" width="16" height="16" fill="#8a8a8a"/><rect x="1" y="1" width="14" height="14" fill="#2b2b2b"/><rect x="1.4" y="1.4" width="13.2" height="2.6" fill="#2236b0"/><rect x="8.6" y="1.4" width="5" height="1.4" fill="#2fa048"/><circle cx="8" cy="9.6" r="4.8" fill="#c9c9c9"/><circle cx="8" cy="9.6" r="4.8" fill="none" stroke="#6e6e6e" stroke-width=".8"/><g fill="#555"><circle cx="5.2" cy="9.4" r=".8"/><circle cx="10.8" cy="9.4" r=".8"/><circle cx="8" cy="6.8" r=".8"/><circle cx="6" cy="7.6" r=".7"/><circle cx="10" cy="7.6" r=".7"/></g><rect x="7" y="12.4" width="2" height="2.4" fill="#2b2b2b"/></svg>
<span class="t" style="left:68.6px;top:166.42px;font-size:13.33px;color:#2e3436;">16:C-Media CMI8738</span>
<svg style="left:31.599999999999998px;top:187.2px" width="10" height="15" viewBox="0 0 10 15"><path d="M1.4 1.4l6.4 6.1-6.4 6.1z" fill="#fff" stroke="#333" stroke-width="1.5"/></svg>
<svg style="left:45.2px;top:186.2px" width="17.6" height="17.6" viewBox="0 0 16 16"><rect x="0" y="0" width="16" height="16" fill="#8a8a8a"/><rect x="1" y="1" width="14" height="14" fill="#2b2b2b"/><rect x="1.4" y="1.4" width="13.2" height="2.6" fill="#2236b0"/><rect x="8.6" y="1.4" width="5" height="1.4" fill="#2fa048"/><circle cx="8" cy="9.6" r="4.8" fill="#c9c9c9"/><circle cx="8" cy="9.6" r="4.8" fill="none" stroke="#6e6e6e" stroke-width=".8"/><g fill="#555"><circle cx="5.2" cy="9.4" r=".8"/><circle cx="10.8" cy="9.4" r=".8"/><circle cx="8" cy="6.8" r=".8"/><circle cx="6" cy="7.6" r=".7"/><circle cx="10" cy="7.6" r=".7"/></g><rect x="7" y="12.4" width="2" height="2.4" fill="#2b2b2b"/></svg>
<span class="t" style="left:68.6px;top:189.52px;font-size:13.33px;color:#2e3436;">128:ardour</span>
<div class="list" style="left:526.8px;top:107.4px;width:423.0px;height:608.6px;"></div>
<div class="hdr" style="left:526.8px;top:107.4px;width:423.0px;height:29px;"></div>
<span class="t" style="left:533.1999999999999px;top:117.72px;font-size:13.33px;color:#2e3436;">Clients en ecriture / Ports d'entrée</span>
<svg style="left:927.0px;top:117px" width="14" height="9" viewBox="0 0 14 9"><path d="M1.2 1.6l5.8 5.4 5.8-5.4" fill="none" stroke="#333" stroke-width="1.8"/></svg>
<svg style="left:536.0px;top:141.0px" width="10" height="15" viewBox="0 0 10 15"><path d="M1.4 1.4l6.4 6.1-6.4 6.1z" fill="#fff" stroke="#333" stroke-width="1.5"/></svg>
<svg style="left:549.5999999999999px;top:140.0px" width="17.6" height="17.6" viewBox="0 0 16 16"><rect x="0" y="0" width="16" height="16" fill="#8a8a8a"/><rect x="1" y="1" width="14" height="14" fill="#2b2b2b"/><rect x="1.4" y="1.4" width="13.2" height="2.6" fill="#2236b0"/><rect x="8.6" y="1.4" width="5" height="1.4" fill="#2fa048"/><circle cx="8" cy="9.6" r="4.8" fill="#c9c9c9"/><circle cx="8" cy="9.6" r="4.8" fill="none" stroke="#6e6e6e" stroke-width=".8"/><g fill="#555"><circle cx="5.2" cy="9.4" r=".8"/><circle cx="10.8" cy="9.4" r=".8"/><circle cx="8" cy="6.8" r=".8"/><circle cx="6" cy="7.6" r=".7"/><circle cx="10" cy="7.6" r=".7"/></g><rect x="7" y="12.4" width="2" height="2.4" fill="#2b2b2b"/></svg>
<span class="t" style="left:573.0px;top:143.32px;font-size:13.33px;color:#2e3436;">14:Midi Through</span>
<svg style="left:536.0px;top:164.1px" width="10" height="15" viewBox="0 0 10 15"><path d="M1.4 1.4l6.4 6.1-6.4 6.1z" fill="#fff" stroke="#333" stroke-width="1.5"/></svg>
<svg style="left:549.5999999999999px;top:163.1px" width="17.6" height="17.6" viewBox="0 0 16 16"><rect x="0" y="0" width="16" height="16" fill="#8a8a8a"/><rect x="1" y="1" width="14" height="14" fill="#2b2b2b"/><rect x="1.4" y="1.4" width="13.2" height="2.6" fill="#2236b0"/><rect x="8.6" y="1.4" width="5" height="1.4" fill="#2fa048"/><circle cx="8" cy="9.6" r="4.8" fill="#c9c9c9"/><circle cx="8" cy="9.6" r="4.8" fill="none" stroke="#6e6e6e" stroke-width=".8"/><g fill="#555"><circle cx="5.2" cy="9.4" r=".8"/><circle cx="10.8" cy="9.4" r=".8"/><circle cx="8" cy="6.8" r=".8"/><circle cx="6" cy="7.6" r=".7"/><circle cx="10" cy="7.6" r=".7"/></g><rect x="7" y="12.4" width="2" height="2.4" fill="#2b2b2b"/></svg>
<span class="t" style="left:573.0px;top:166.42px;font-size:13.33px;color:#2e3436;">16:C-Media CMI8738</span>
<svg style="left:536.0px;top:187.2px" width="10" height="15" viewBox="0 0 10 15"><path d="M1.4 1.4l6.4 6.1-6.4 6.1z" fill="#fff" stroke="#333" stroke-width="1.5"/></svg>
<svg style="left:549.5999999999999px;top:186.2px" width="17.6" height="17.6" viewBox="0 0 16 16"><rect x="0" y="0" width="16" height="16" fill="#8a8a8a"/><rect x="1" y="1" width="14" height="14" fill="#2b2b2b"/><rect x="1.4" y="1.4" width="13.2" height="2.6" fill="#2236b0"/><rect x="8.6" y="1.4" width="5" height="1.4" fill="#2fa048"/><circle cx="8" cy="9.6" r="4.8" fill="#c9c9c9"/><circle cx="8" cy="9.6" r="4.8" fill="none" stroke="#6e6e6e" stroke-width=".8"/><g fill="#555"><circle cx="5.2" cy="9.4" r=".8"/><circle cx="10.8" cy="9.4" r=".8"/><circle cx="8" cy="6.8" r=".8"/><circle cx="6" cy="7.6" r=".7"/><circle cx="10" cy="7.6" r=".7"/></g><rect x="7" y="12.4" width="2" height="2.4" fill="#2b2b2b"/></svg>
<span class="t" style="left:573.0px;top:189.52px;font-size:13.33px;color:#2e3436;">17:OPL3 FM synth</span>
<svg style="left:536.0px;top:210.3px" width="10" height="15" viewBox="0 0 10 15"><path d="M1.4 1.4l6.4 6.1-6.4 6.1z" fill="#fff" stroke="#333" stroke-width="1.5"/></svg>
<svg style="left:549.5999999999999px;top:209.3px" width="17.6" height="17.6" viewBox="0 0 16 16"><rect x="0" y="0" width="16" height="16" fill="#8a8a8a"/><rect x="1" y="1" width="14" height="14" fill="#2b2b2b"/><rect x="1.4" y="1.4" width="13.2" height="2.6" fill="#2236b0"/><rect x="8.6" y="1.4" width="5" height="1.4" fill="#2fa048"/><circle cx="8" cy="9.6" r="4.8" fill="#c9c9c9"/><circle cx="8" cy="9.6" r="4.8" fill="none" stroke="#6e6e6e" stroke-width=".8"/><g fill="#555"><circle cx="5.2" cy="9.4" r=".8"/><circle cx="10.8" cy="9.4" r=".8"/><circle cx="8" cy="6.8" r=".8"/><circle cx="6" cy="7.6" r=".7"/><circle cx="10" cy="7.6" r=".7"/></g><rect x="7" y="12.4" width="2" height="2.4" fill="#2b2b2b"/></svg>
<span class="t" style="left:573.0px;top:212.62px;font-size:13.33px;color:#2e3436;">128:ardour</span>
<div class="btn dis" style="left:27.2px;top:726px;width:112.39999999999999px;height:31.4px;"></div>
<svg style="left:38.6px;top:733.6px" width="17" height="17" viewBox="0 0 17 17"><path d="M1.2 13.2c3.8 0 4.4-1.6 6.2-4.6s3-5.2 7.2-5.2M6.6 6l4.2 3.4" fill="none" stroke="#5e5e5e" stroke-width="2.5"/></svg>
<span class="t" style="left:59px;top:736.72px;font-size:13.33px;color:#adadad;"><u>C</u>onnecter</span>
<div class="btn dis" style="left:145.6px;top:726px;width:129.00000000000003px;height:31.4px;"></div>
<svg style="left:158.4px;top:733.6px" width="17" height="17" viewBox="0 0 17 17"><path d="M2.4 4c2.6 0 3.4 1 4.8 3l2 2.6c1.4 2 2.4 3 5 3M14.2 4c-2.6 0-3.4 1-4.8 3l-2 2.6c-1.4 2-2.4 3-5 3" fill="none" stroke="#5c5c5c" stroke-width="2.3"/></svg>
<span class="t" style="left:178px;top:736.72px;font-size:13.33px;color:#adadad;"><u>D</u>éconnecter</span>
<div class="btn dis" style="left:280px;top:726px;width:161.39999999999998px;height:31.4px;"></div>
<svg style="left:293px;top:733.6px" width="17" height="17" viewBox="0 0 17 17"><path d="M1.6 4c2.6 0 3.6 1 5 3l2 2.600000000000001c1.4 2 2.6 3 5 3M13.8 4c-2.6 0-3.6 1-5 3l-2 2.600000000000001c-1.4 2-2.6 3-5 3M9 1.6l3 5M14 6l2.400000000000002 1M10 15l4-3" fill="none" stroke="#595959" stroke-width="2.2"/></svg>
<span class="t" style="left:312px;top:736.72px;font-size:13.33px;color:#adadad;"><u>T</u>out déconnecter</span>
<div class="btn" style="left:577px;top:726px;width:127.60000000000002px;height:31.4px;"></div>
<svg style="left:590.6px;top:733.6px" width="17" height="17" viewBox="0 0 17 17"><g transform="translate(1 2.4)"><path d="M0 6l3.8-3.6v2.3h2.2v2.600000000000001H3.800000000000001v2.3z" fill="#2a6fc2"/><path d="M12 2.2C8.4.4 4.8 2.4 4.8 6s3.6 5.6 7.2 3.8M5.6 4.800000000000001h5M5.6 7.300000000000001h5" fill="none" stroke="#1e5fae" stroke-width="1.7"/></g></svg>
<span class="t" style="left:608px;top:736.72px;font-size:13.33px;color:#2e3436;"><u>A</u>fficher tout</span>
<div class="btn" style="left:839px;top:726px;width:106.39999999999998px;height:31.4px;"></div>
<svg style="left:851.8px;top:733.6px" width="17" height="17" viewBox="0 0 17 17"><path d="M7.4 3.4a5.3 5.3 0 1 0 5.6 5.2" fill="none" stroke="#1b5fb2" stroke-width="2.7"/><path d="M6.4 0.4l5.6 3.2-5.6 3.4z" fill="#1b5fb2"/></svg>
<span class="t" style="left:869.8px;top:736.72px;font-size:13.33px;color:#2e3436;"><u>R</u>afraîchir</span>
<div style="left:188.8px;top:552px;width:238.6px;height:25.8px;background:#eaf2fb;border:1.3px solid #7fa9d8"></div>
<span class="t" style="left:194.2px;top:560.12px;font-size:13.33px;color:#1a1a1a;">Clients en lecture / Ports de sortie</span>
<svg style="left:185.4px;top:533px" width="16" height="24" viewBox="0 0 16 24"><path d="M1.6 1.2v16.6l3.8-3.6 2.6 6.2 2.6-1.1-2.600000000000001-6h5.2z" fill="#111" stroke="#f4f4f4" stroke-width="1.1"/></svg>
<div style="left:0px;top:996.2px;width:1010px;height:1.2px;background:#aeb2be;"></div>
<div style="left:0px;top:997.2px;width:1280px;height:27px;background:#000;"></div>
<div style="left:960.4px;top:997.2px;width:180.6px;height:27px;background:#333;"></div>
<svg style="left:17.6px;top:1001px" width="17" height="17" viewBox="0 0 17 17"><path d="M1 3.6h5.6l1.6 2h7.8v9.4H1z" fill="#b9bda8"/><path d="M1 6.6h15v8.4H1z" fill="#d7dacb"/><path d="M5.6 9.6h5.800000000000001M8.5 8v5" stroke="#7d8468" stroke-width="1.4"/></svg>
<span class="t" style="left:42.2px;top:1005.80px;font-size:13px;color:#c9c9c9;">Téléchargements</span>
<svg style="left:208.6px;top:1001px" width="17" height="17" viewBox="0 0 17 17"><circle cx="8.5" cy="8.5" r="7.6" fill="#e66a11"/><circle cx="8.8" cy="8.2" r="4.6" fill="#2f5fc4"/><path d="M1.6 6c1-3.6 5-5.4 8.4-4.600000000000001-3 .6-3.4 3.2-1.6 4.400000000000001-3 .8-1.6 4.400000000000001 1.6 4.2 3-.2 4-2 3.6-4.2 2 3.6 0 8.8-5 9.2-4.6.2-8-3.8-7-9z" fill="#f7a21b"/></svg>
<span class="t" style="left:233.6px;top:1005.80px;font-size:13px;color:#c9c9c9;">Linux MAO | Plus de...</span>
<svg style="left:397.4px;top:1001px" width="17" height="17" viewBox="0 0 17 17"><rect x="2" y="2.6" width="12" height="13" fill="#f2f2ee" stroke="#8c8c86"/><rect x="2" y="2.6" width="12" height="3" fill="#b9b9b2"/><path d="M4.4 8.4h7M4.4 10.8h7M4.4 13.2h5" stroke="#9a9a94"/><path d="M15.4 1.6l-6 8-1.2 2.6 2.6-1.400000000000001 6-8z" fill="#d9772c"/></svg>
<span class="t" style="left:422.4px;top:1005.80px;font-size:13px;color:#c9c9c9;">*Document 1 non en...</span>
<svg style="left:588px;top:1001px" width="17" height="17" viewBox="0 0 17 17"><path d="M8.5 1.2l7.6 14H.9z" fill="#c3141b"/><path d="M8.5 6.4l3.6 7H4.9z" fill="#ef5358"/></svg>
<span class="t" style="left:612px;top:1005.80px;font-size:13px;color:#c9c9c9;">*Des mots clefs et d...</span>
<svg style="left:780px;top:1001px" width="17" height="17" viewBox="0 0 17 17"><path d="M1.6 1.8l4 1.6 8 9-2.6 2.400000000000002-8-9z" fill="#c9b77a"/><path d="M10.6 9.8l4.8 5.6" stroke="#6c6c6c" stroke-width="2.4"/><path d="M1.6 1.8l2.400000000000002 3.6" stroke="#777" stroke-width="1.6"/></svg>
<span class="t" style="left:802.6px;top:1005.80px;font-size:13px;color:#c9c9c9;">JACK Audio Connect...</span>
<svg style="left:967.6px;top:1001px" width="17" height="17" viewBox="0 0 17 17"><path d="M1.6 2.6c4.6 0 5 5.9 8.6 5.9M1.6 14.4c4.6 0 5-5.9 8.6-5.9M15.4 2.6c-4.6 0-5 5.9-8.6 5.9M15.4 14.4c-4.6 0-5-5.9-8.6-5.9M1 8.500000000000002h15" fill="none" stroke="#e2480f" stroke-width="2"/></svg>
<span class="t" style="left:992.6px;top:1005.80px;font-size:13px;color:#ececec;">Connexions - Kit de ...</span>
<div style="left:1152px;top:998.8px;width:30.2px;height:23.6px;background:#262626;border:1.3px solid #444"></div>
<div style="left:1184px;top:998.8px;width:30.2px;height:23.6px;background:#262626;border:1.3px solid #444"></div>
<div style="left:1216px;top:998.8px;width:30.2px;height:23.6px;background:#5e9bdf;border:1.3px solid #86b6ec"></div>
<svg style="left:1158px;top:1001px" width="18" height="20" viewBox="0 0 18 20"><rect x="3.6" y="1" width="10.8" height="17.6" rx="3" fill="#e9e9e4"/><circle cx="9" cy="8" r="3.6" fill="#b79a1c"/><circle cx="9" cy="8" r="1.6" fill="#6f5c0b"/></svg>
<svg style="left:1190px;top:1001px" width="18" height="20" viewBox="0 0 18 20"><rect x="2.6" y="1.6" width="13" height="16" fill="#eef0ea"/><path d="M2.6 1.6h11l-3 4 2.6 4.4-6 1.6-4.600000000000001 4z" fill="#5fb53a"/></svg>
<svg style="left:1219px;top:1000.4px" width="17" height="20" viewBox="0 0 17 17"><path d="M1.6 2.6c4.6 0 5 5.9 8.6 5.9M1.6 14.4c4.6 0 5-5.9 8.6-5.9M15.4 2.6c-4.6 0-5 5.9-8.6 5.9M15.4 14.4c-4.6 0-5-5.9-8.6-5.9M1 8.500000000000002h15" fill="none" stroke="#e2480f" stroke-width="2"/></svg>
<div style="left:1222px;top:1019px;width:14px;height:1.8px;background:#c02a12;"></div>
<div style="left:1240px;top:1003px;width:3.4px;height:15px;background:#cfe2f8;"></div>
</div></body></html>
